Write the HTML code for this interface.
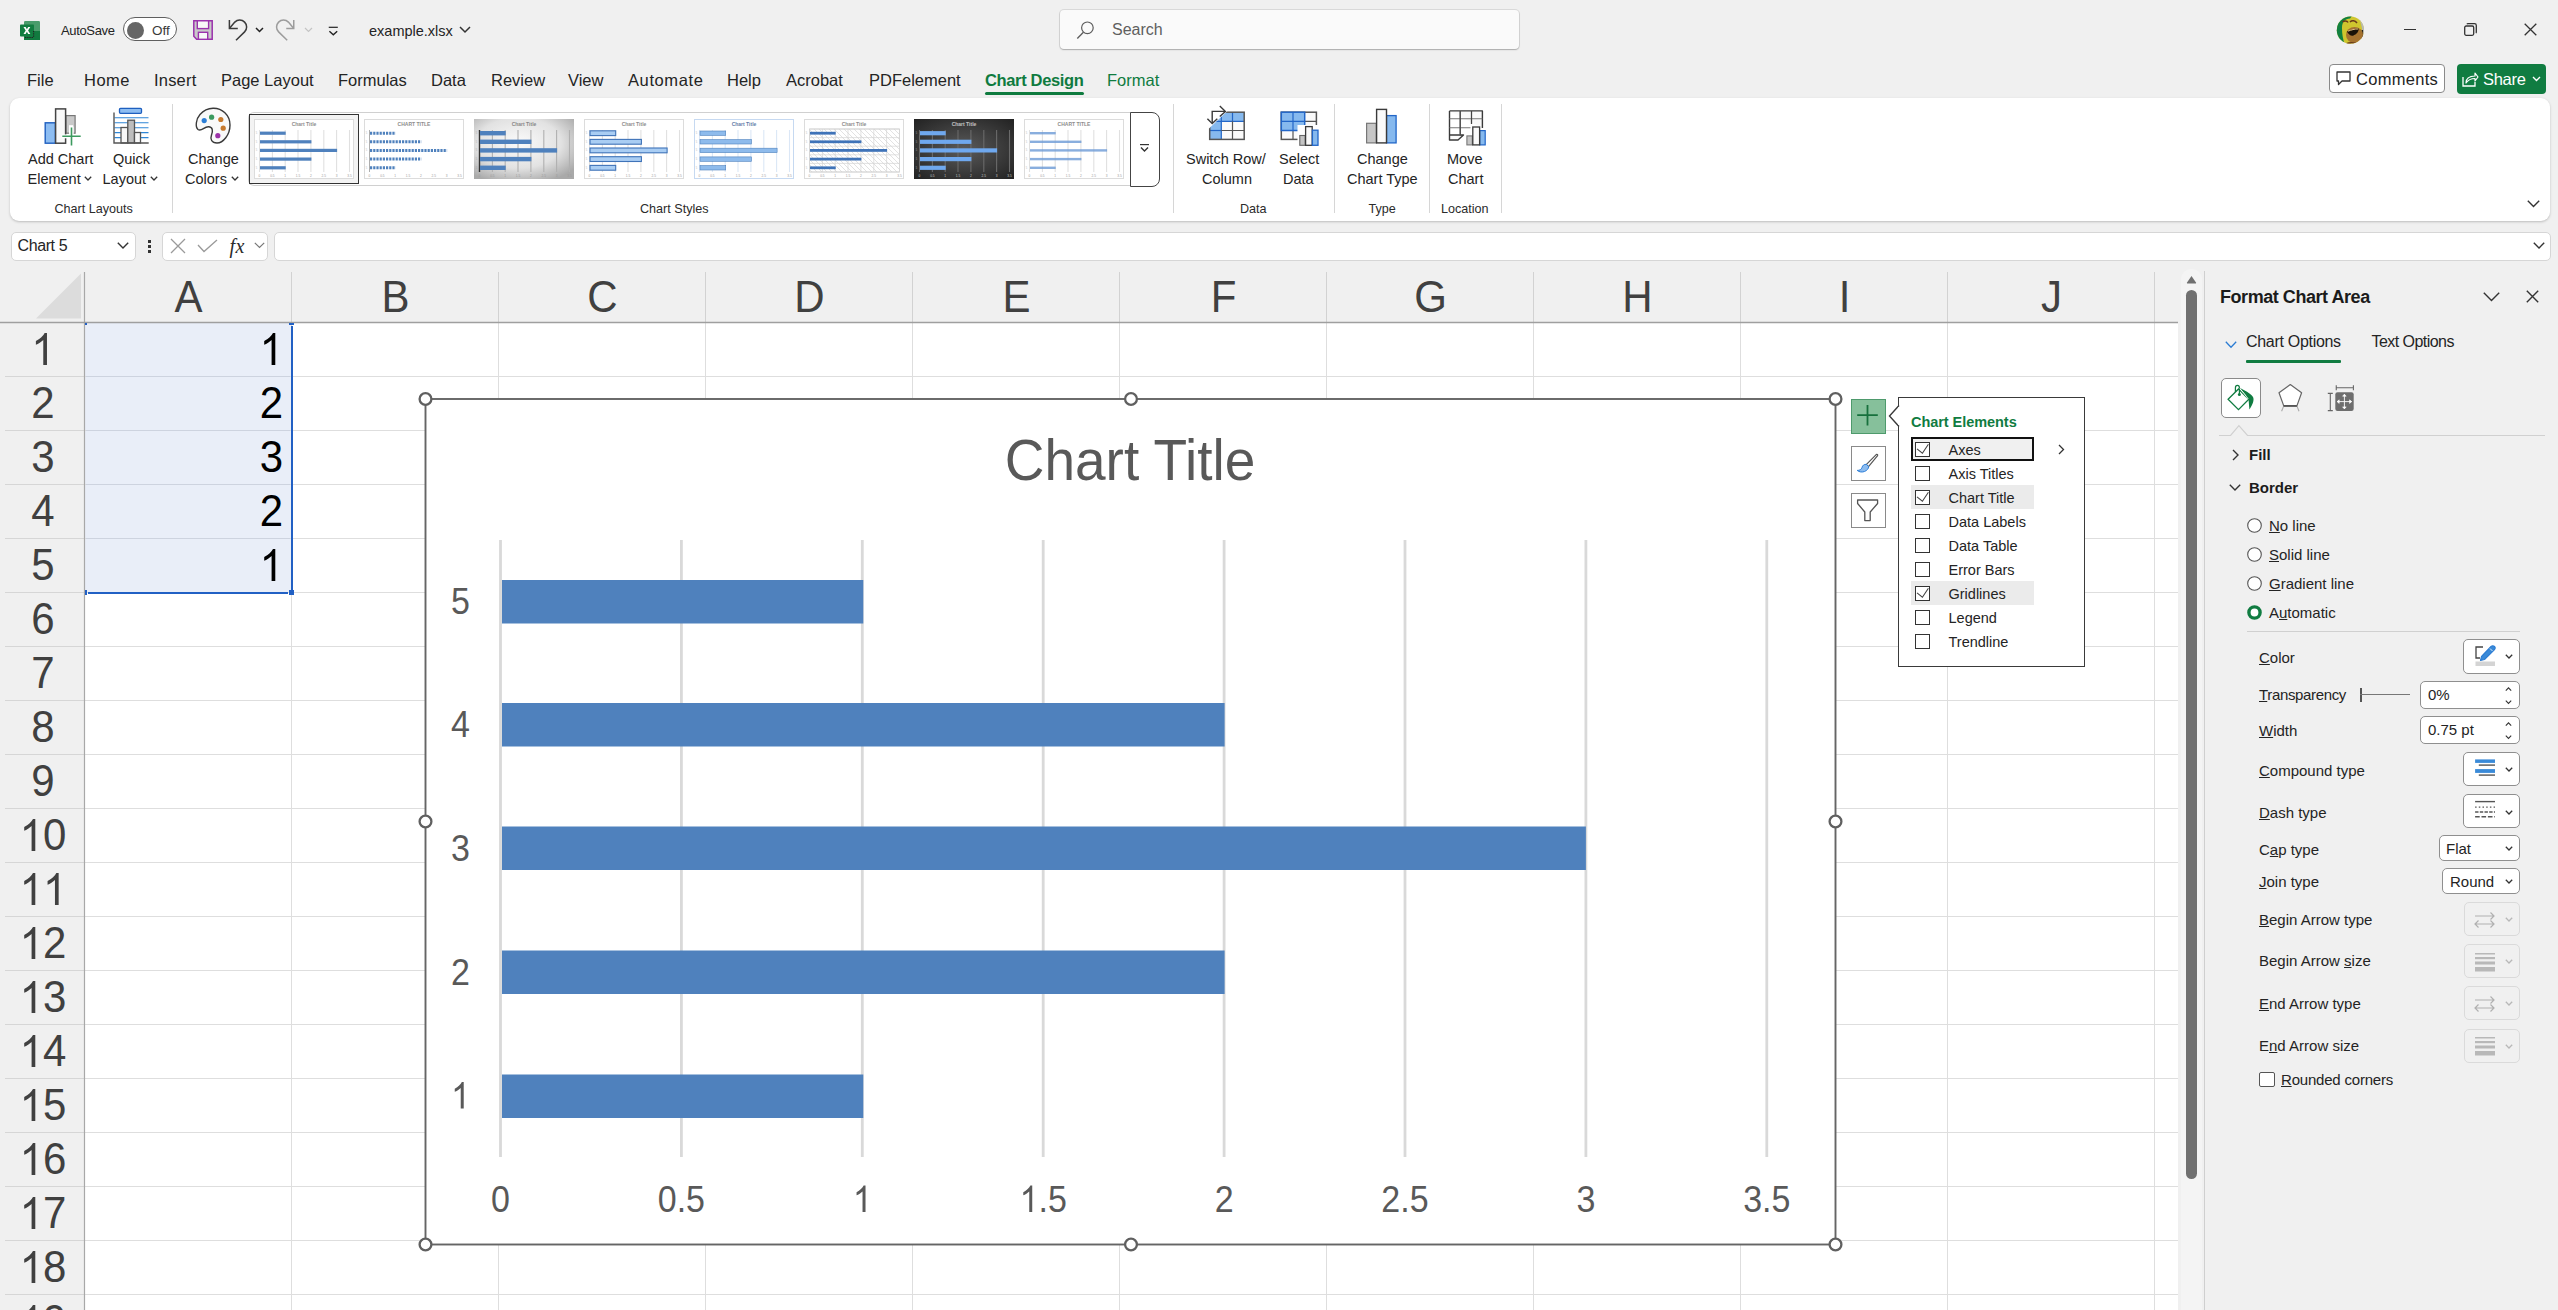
<!DOCTYPE html>
<html><head><meta charset="utf-8"><title>Excel</title>
<style>
html,body{margin:0;padding:0;}
body{width:2558px;height:1310px;overflow:hidden;position:relative;background:#f0f0f0;font-family:"Liberation Sans",sans-serif;}
.t{position:absolute;line-height:1;white-space:nowrap;}
svg{overflow:visible}
</style></head><body>

<svg style="position:absolute;left:20px;top:20px;" width="20" height="20" viewBox="0 0 20 20">
<rect x="4" y="1" width="16" height="19" rx="1.2" fill="#4a9c6b"/>
<rect x="4" y="11" width="16" height="9" fill="#117a3f"/>
<rect x="0" y="4.5" width="14" height="12" rx="0.8" fill="#127d40"/>
<path d="M3.5 7 L5.6 7 L6.9 9.3 L8.2 7 L10.3 7 L8.1 10.5 L10.3 14 L8.2 14 L6.9 11.7 L5.6 14 L3.5 14 L5.7 10.5 Z" fill="#fff"/>
<path d="M5 17.5 H13.5 M13.6 11 V17.5" stroke="#222" stroke-width="1.1" stroke-dasharray="1.3 0.9"/>
</svg>
<div class="t" style="left:61px;top:24.00px;font-size:13px;color:#242424;letter-spacing:-0.35px;">AutoSave</div>
<div style="position:absolute;left:123px;top:17px;width:52px;height:22px;border:1.3px solid #5f5f5f;border-radius:12px;background:#fff;"></div>
<div style="position:absolute;left:127px;top:21.5px;width:17px;height:17px;border-radius:50%;background:#666;"></div>
<div class="t" style="left:152px;top:23.57px;font-size:13.5px;color:#3a3a3a;">Off</div>
<svg style="position:absolute;left:193px;top:20px;" width="20" height="20" viewBox="0 0 20 20">
<path d="M0.8 0.8 H19.2 V19.2 H3.6 L0.8 16.2 Z" fill="#c9c9c9" stroke="#9b32ad" stroke-width="1.5"/>
<rect x="4.3" y="0.8" width="11.3" height="7.8" fill="#f8f8f8" stroke="#9b32ad" stroke-width="1.4"/>
<rect x="5.4" y="12.3" width="9.3" height="7" fill="#f8f8f8" stroke="#9b32ad" stroke-width="1.4"/>
</svg>
<svg style="position:absolute;left:228px;top:19px;" width="20" height="23" viewBox="0 0 20 23"><path d="M1.4 1.1 V9.4 H9.8" fill="none" stroke="#3b3b3b" stroke-width="1.5"/><path d="M1.6 9.2 L6.8 3.1 A6.9 6.9 0 0 1 16.6 12.9 L8 21.3" fill="none" stroke="#3b3b3b" stroke-width="1.5"/></svg>
<svg style="position:absolute;left:255px;top:27px;" width="9" height="6" viewBox="0 0 9 6"><path d="M1 1 L4.5 4.5 L8 1" fill="none" stroke="#222" stroke-width="1.5"/></svg>
<svg style="position:absolute;left:276px;top:19px;" width="20" height="23" viewBox="0 0 20 23"><path d="M17.75 1.1 V9.4 H10.25" fill="none" stroke="#9c9c9c" stroke-width="1.5"/><path d="M17.55 9.2 L12.4 3.1 A6.9 6.9 0 0 0 2.6 12.9 L11.2 21.3" fill="none" stroke="#9c9c9c" stroke-width="1.5"/></svg>
<svg style="position:absolute;left:304px;top:27px;" width="9" height="6" viewBox="0 0 9 6"><path d="M1 1 L4.5 4.5 L8 1" fill="none" stroke="#c4c4c4" stroke-width="1.2"/></svg>
<svg style="position:absolute;left:328px;top:26px;" width="11" height="10" viewBox="0 0 11 10"><path d="M0.75 1.3 H9.8" stroke="#222" stroke-width="1.2"/><path d="M1.4 5.2 L5.3 8.7 L9.2 5.2" fill="none" stroke="#222" stroke-width="1.4"/></svg>
<div class="t" style="left:369px;top:23.73px;font-size:14.5px;color:#242424;">example.xlsx</div>
<svg style="position:absolute;left:459px;top:26px;" width="12" height="8" viewBox="0 0 12 8"><path d="M1 1 L6 6 L11 1" fill="none" stroke="#333" stroke-width="1.5"/></svg>
<div style="position:absolute;left:1060px;top:10px;width:459px;height:39px;background:#fafafa;border-radius:4px;box-shadow:0 1px 1.5px rgba(0,0,0,0.22), 0 0 0 1px rgba(0,0,0,0.09);"></div>
<svg style="position:absolute;left:1076px;top:21px;" width="18" height="18" viewBox="0 0 18 18"><circle cx="11.4" cy="6.8" r="5.8" fill="none" stroke="#5c5c5c" stroke-width="1.2"/><path d="M7.4 11.2 L1.3 17.5" stroke="#5c5c5c" stroke-width="1.3"/></svg>
<div class="t" style="left:1112px;top:22.46px;font-size:16px;color:#5f5f5f;">Search</div>
<svg style="position:absolute;left:2336px;top:16px;" width="29" height="29" viewBox="0 0 29 29">
<defs><clipPath id="av"><circle cx="14.4" cy="14.2" r="13.6"/></clipPath></defs>
<g clip-path="url(#av)">
<rect width="29" height="29" fill="#cfc62e"/>
<path d="M0 0 H16 L14 2.5 C9 2.5 6 6 6 12 C6 18 7 24 9 29 H0 Z" fill="#118040"/>
<path d="M20 0 H29 V9 L24 4 Z" fill="#1d1d1d"/>
<path d="M24 5 L29 9 V29 H24 C27 22 27 12 24 5 Z" fill="#b8b8b8"/>
<path d="M25.5 14 V24 L27 24 V14 Z" fill="#222"/>
<ellipse cx="18.5" cy="19" rx="8.5" ry="8" fill="#a5722f"/>
<path d="M11 15.5 C14 14 19 12 22.5 12.5 C23 15 21 18 17.5 19.5 C15 20.5 12.5 18.5 11 15.5 Z" fill="#1a1208"/>
<path d="M12 15.2 C15 14 19 12.8 22 13" fill="none" stroke="#e8c080" stroke-width="1"/>
<path d="M6.5 6 C8 4.5 11 4.5 12 6.5 M14 6 C16 4 19 4.5 21 7" fill="none" stroke="#6a3a1a" stroke-width="1.6"/>
<path d="M10 28 C14 26 20 27 24 29" fill="none" stroke="#6a3a1a" stroke-width="1.4"/>
</g></svg>
<div style="position:absolute;left:2404px;top:29px;width:12px;height:1.3px;background:#333;"></div>
<svg style="position:absolute;left:2464px;top:23.3px;" width="13" height="13" viewBox="0 0 13 13"><rect x="0.7" y="3" width="9" height="9.3" rx="1.5" fill="none" stroke="#333" stroke-width="1.3"/><path d="M3 1.2 C3.2 0.7 3.5 0.7 4 0.7 H10.5 C11.5 0.7 12.3 1.5 12.3 2.5 V9 C12.3 9.5 12.2 9.8 11.8 10" fill="none" stroke="#333" stroke-width="1.3"/></svg>
<svg style="position:absolute;left:2524px;top:23.3px;" width="13" height="13" viewBox="0 0 13 13"><path d="M0.7 0.7 L12.3 12.3 M12.3 0.7 L0.7 12.3" stroke="#333" stroke-width="1.3"/></svg>
<div class="t" style="left:27px;top:72.03px;font-size:16.5px;color:#242424;letter-spacing:0px;">File</div>
<div class="t" style="left:84px;top:72.03px;font-size:16.5px;color:#242424;letter-spacing:0.5px;">Home</div>
<div class="t" style="left:154px;top:72.03px;font-size:16.5px;color:#242424;letter-spacing:0.2px;">Insert</div>
<div class="t" style="left:221px;top:72.03px;font-size:16.5px;color:#242424;letter-spacing:0px;">Page Layout</div>
<div class="t" style="left:338px;top:72.03px;font-size:16.5px;color:#242424;letter-spacing:0px;">Formulas</div>
<div class="t" style="left:431px;top:72.03px;font-size:16.5px;color:#242424;letter-spacing:0px;">Data</div>
<div class="t" style="left:491px;top:72.03px;font-size:16.5px;color:#242424;letter-spacing:0px;">Review</div>
<div class="t" style="left:568px;top:72.03px;font-size:16.5px;color:#242424;letter-spacing:0px;">View</div>
<div class="t" style="left:628px;top:72.03px;font-size:16.5px;color:#242424;letter-spacing:0.6px;">Automate</div>
<div class="t" style="left:727px;top:72.03px;font-size:16.5px;color:#242424;letter-spacing:0px;">Help</div>
<div class="t" style="left:786px;top:72.03px;font-size:16.5px;color:#242424;letter-spacing:0px;">Acrobat</div>
<div class="t" style="left:869px;top:72.03px;font-size:16.5px;color:#242424;letter-spacing:0px;">PDFelement</div>
<div class="t" style="left:985px;top:72.03px;font-size:16.5px;color:#0f7b3f;font-weight:bold;letter-spacing:-0.35px;">Chart Design</div>
<div style="position:absolute;left:985px;top:92px;width:99px;height:3px;background:#0f7b3f;border-radius:1.5px;"></div>
<div class="t" style="left:1107px;top:72.03px;font-size:16.5px;color:#0f7b3f;">Format</div>
<div style="position:absolute;left:2329px;top:64px;width:116px;height:29px;border:1px solid #8a8a8a;border-radius:4px;background:#fff;box-sizing:border-box;"></div>
<svg style="position:absolute;left:2336px;top:71px;" width="15" height="15" viewBox="0 0 15 15"><path d="M1 1 H14 V10 H6 L2.5 13.5 V10 H1 Z" fill="none" stroke="#333" stroke-width="1.3" stroke-linejoin="round"/></svg>
<div class="t" style="left:2356px;top:71.03px;font-size:16.5px;color:#242424;letter-spacing:0.3px;">Comments</div>
<div style="position:absolute;left:2457px;top:64px;width:89px;height:30px;background:#107c41;border-radius:4px;"></div>
<svg style="position:absolute;left:2462px;top:71px;" width="16" height="16" viewBox="0 0 16 16"><path d="M1 6 V15 H13 V11" fill="none" stroke="#fff" stroke-width="1.3"/><path d="M4 12 C4 7 8 5 13 5 V2 L16 6 L13 10 V7.5 C9 7.5 6 9 4 12 Z" fill="none" stroke="#fff" stroke-width="1.2" stroke-linejoin="round"/></svg>
<div class="t" style="left:2483px;top:71.03px;font-size:16.5px;color:#ffffff;letter-spacing:-0.3px;">Share</div>
<svg style="position:absolute;left:2532px;top:76px;" width="9" height="6" viewBox="0 0 9 6"><path d="M1 1 L4.5 4.5 L8 1" fill="none" stroke="#fff" stroke-width="1.4"/></svg>
<div style="position:absolute;left:10px;top:98px;width:2540px;height:123px;background:#fff;border-radius:9px;box-shadow:0 1px 2.5px rgba(0,0,0,0.22);"></div>
<svg style="position:absolute;left:44px;top:107px;" width="38" height="40" viewBox="0 0 38 40">
<rect x="1.2" y="15.8" width="10.2" height="20.4" fill="#8dbdf2" stroke="#1e5fbf" stroke-width="1.4"/>
<rect x="21.9" y="8.6" width="9.2" height="17.6" fill="#c9c9c9" stroke="#777" stroke-width="1.2"/>
<rect x="11.6" y="1.9" width="10" height="34.3" fill="#f9f9f9" stroke="#444" stroke-width="1.5"/>
<rect x="25" y="18.2" width="4.2" height="8.6" fill="#fff"/>
<rect x="17.6" y="27.4" width="19.8" height="3.9" fill="#fff"/>
<rect x="25.4" y="19.5" width="4.2" height="19.5" fill="#fff"/>
<path d="M27.5 20.4 V38.6 M18.3 29.3 H36.7" stroke="#3c9a5f" stroke-width="1.6"/>
</svg>
<div class="t" style="left:28px;top:151.73px;font-size:14.5px;color:#242424;">Add Chart</div>
<div class="t" style="left:27.5px;top:171.73px;font-size:14.5px;color:#242424;">Element</div>
<svg style="position:absolute;left:84px;top:176px;" width="8" height="5" viewBox="0 0 8 5"><path d="M0.8 0.8 L4 4 L7.2 0.8" fill="none" stroke="#333" stroke-width="1.3"/></svg>
<svg style="position:absolute;left:113px;top:107px;" width="37" height="37" viewBox="0 0 37 37"><rect x="6.5" y="1.3" width="22" height="5" rx="1" fill="#8dbdf2" stroke="#1e5fbf" stroke-width="1.3"/><path d="M1.5 10.8 H35.5" stroke="#2f86d6" stroke-width="1.1"/><path d="M1.5 15.8 H35.5" stroke="#2f86d6" stroke-width="1.1"/><path d="M1.5 20.7 H35.5" stroke="#2f86d6" stroke-width="1.1"/><path d="M1.5 25.6 H35.5" stroke="#2f86d6" stroke-width="1.1"/><path d="M1.5 30.6 H35.5" stroke="#2f86d6" stroke-width="1.1"/><rect x="8" y="20.5" width="6.8" height="15.5" fill="#f7f7f7" stroke="#555" stroke-width="1.3"/><rect x="14.8" y="13.2" width="6.7" height="22.8" fill="#bdbdbd" stroke="#555" stroke-width="1.3"/><rect x="21.5" y="25.5" width="6" height="10.5" fill="#f7f7f7" stroke="#555" stroke-width="1.3"/><path d="M1 5.5 V36 H35.7" fill="none" stroke="#555" stroke-width="1.4"/></svg>
<div class="t" style="left:113px;top:151.73px;font-size:14.5px;color:#242424;">Quick</div>
<div class="t" style="left:102.5px;top:171.73px;font-size:14.5px;color:#242424;">Layout</div>
<svg style="position:absolute;left:150px;top:176px;" width="8" height="5" viewBox="0 0 8 5"><path d="M0.8 0.8 L4 4 L7.2 0.8" fill="none" stroke="#333" stroke-width="1.3"/></svg>
<div style="position:absolute;left:172px;top:104px;width:1px;height:109px;background:#d6d6d6;"></div>
<div class="t" style="left:54.5px;top:203.33px;font-size:12.6px;color:#2b2b2b;">Chart Layouts</div>
<svg style="position:absolute;left:195px;top:107px;" width="37" height="38" viewBox="0 0 37 38">
<path d="M18 1.3 C27 1 35 8 35 18 C35 28 28 36 22 36 C16.5 36 15 32 16.5 28 C18 24 18 20 13.5 19.8 C9 19.6 6.5 25 3 22.5 C0 20 1 12 5 7.5 C8.5 3.5 13 1.4 18 1.3 Z" fill="#f9f9f9" stroke="#3a3a3a" stroke-width="1.4"/>
<circle cx="9.2" cy="13.6" r="2.6" fill="#2d7fd6"/>
<circle cx="16.6" cy="10.2" r="2.6" fill="#3a9a5f"/>
<circle cx="25.8" cy="12.5" r="2.6" fill="#c77a2e"/>
<circle cx="28.2" cy="21.2" r="2.6" fill="#c77a2e"/>
<circle cx="22.8" cy="28.7" r="2.6" fill="#9b32a8"/>
</svg>
<div class="t" style="left:188px;top:151.73px;font-size:14.5px;color:#242424;">Change</div>
<div class="t" style="left:185px;top:171.73px;font-size:14.5px;color:#242424;">Colors</div>
<svg style="position:absolute;left:231px;top:176px;" width="8" height="5" viewBox="0 0 8 5"><path d="M0.8 0.8 L4 4 L7.2 0.8" fill="none" stroke="#333" stroke-width="1.3"/></svg>
<div style="position:absolute;left:248px;top:112px;width:900px;height:74px;border-top:1.2px solid #d0d0d0;border-bottom:1.2px solid #d0d0d0;border-left:1.2px solid #d0d0d0;border-radius:6px 0 0 6px;box-sizing:border-box;"></div>
<div style="position:absolute;left:249px;top:114px;width:110px;height:70px;border:1.7px solid #333;background:#f3f3f3;box-sizing:border-box;"></div>
<svg style="position:absolute;left:254px;top:119px;" width="100" height="60" viewBox="0 0 100 60"><rect x="0.5" y="0.5" width="99" height="59" fill="#fff" stroke="#dcdcdc" stroke-width="1"/><path d="M5.5 11 V53" stroke="#e0e0e0" stroke-width="1.1"/><path d="M18.4 11 V53" stroke="#e0e0e0" stroke-width="1.1"/><path d="M31.2 11 V53" stroke="#e0e0e0" stroke-width="1.1"/><path d="M44.0 11 V53" stroke="#e0e0e0" stroke-width="1.1"/><path d="M56.9 11 V53" stroke="#e0e0e0" stroke-width="1.1"/><path d="M69.8 11 V53" stroke="#e0e0e0" stroke-width="1.1"/><path d="M82.6 11 V53" stroke="#e0e0e0" stroke-width="1.1"/><path d="M95.5 11 V53" stroke="#e0e0e0" stroke-width="1.1"/><text x="50" y="6.5" font-size="5" text-anchor="middle" fill="#666" font-family="Liberation Sans" font-weight="bold" opacity="0.75">Chart Title</text><rect x="6" y="12.6" width="25.7" height="3.2" fill="#4f81bd"/><rect x="6" y="21.2" width="51.4" height="3.2" fill="#4f81bd"/><rect x="6" y="29.799999999999997" width="77.1" height="3.2" fill="#4f81bd"/><rect x="6" y="38.5" width="51.4" height="3.2" fill="#4f81bd"/><rect x="6" y="47.199999999999996" width="25.7" height="3.2" fill="#4f81bd"/><text x="5.5" y="57.5" font-size="3.2" text-anchor="middle" fill="#999" font-family="Liberation Sans">0</text><text x="18.4" y="57.5" font-size="3.2" text-anchor="middle" fill="#999" font-family="Liberation Sans">0.5</text><text x="31.2" y="57.5" font-size="3.2" text-anchor="middle" fill="#999" font-family="Liberation Sans">1</text><text x="44.0" y="57.5" font-size="3.2" text-anchor="middle" fill="#999" font-family="Liberation Sans">1.5</text><text x="56.9" y="57.5" font-size="3.2" text-anchor="middle" fill="#999" font-family="Liberation Sans">2</text><text x="69.8" y="57.5" font-size="3.2" text-anchor="middle" fill="#999" font-family="Liberation Sans">2.5</text><text x="82.6" y="57.5" font-size="3.2" text-anchor="middle" fill="#999" font-family="Liberation Sans">3</text><text x="95.5" y="57.5" font-size="3.2" text-anchor="middle" fill="#999" font-family="Liberation Sans">3.5</text><text x="2.5" y="15.2" font-size="2.6" text-anchor="middle" fill="#999" font-family="Liberation Sans" opacity="0.7">5</text><text x="2.5" y="23.8" font-size="2.6" text-anchor="middle" fill="#999" font-family="Liberation Sans" opacity="0.7">5</text><text x="2.5" y="32.4" font-size="2.6" text-anchor="middle" fill="#999" font-family="Liberation Sans" opacity="0.7">5</text><text x="2.5" y="41.1" font-size="2.6" text-anchor="middle" fill="#999" font-family="Liberation Sans" opacity="0.7">5</text><text x="2.5" y="49.8" font-size="2.6" text-anchor="middle" fill="#999" font-family="Liberation Sans" opacity="0.7">5</text></svg>
<svg style="position:absolute;left:364px;top:119px;" width="100" height="60" viewBox="0 0 100 60"><rect x="0.5" y="0.5" width="99" height="59" fill="#fff" stroke="#dcdcdc" stroke-width="1"/><path d="M5.5 11 V53" stroke="#777" stroke-width="0.6"/><text x="50" y="6.5" font-size="5" text-anchor="middle" fill="#666" font-family="Liberation Sans" font-weight="bold" opacity="0.75">CHART TITLE</text><path d="M6 14.2 H31.7" stroke="#4f81bd" stroke-width="3" stroke-dasharray="2.2 1"/><path d="M6 22.8 H57.4" stroke="#4f81bd" stroke-width="3" stroke-dasharray="2.2 1"/><path d="M6 31.4 H83.1" stroke="#4f81bd" stroke-width="3" stroke-dasharray="2.2 1"/><path d="M6 40.1 H57.4" stroke="#4f81bd" stroke-width="3" stroke-dasharray="2.2 1"/><path d="M6 48.8 H31.7" stroke="#4f81bd" stroke-width="3" stroke-dasharray="2.2 1"/><text x="5.5" y="57.5" font-size="3.2" text-anchor="middle" fill="#999" font-family="Liberation Sans">0</text><text x="18.4" y="57.5" font-size="3.2" text-anchor="middle" fill="#999" font-family="Liberation Sans">0.5</text><text x="31.2" y="57.5" font-size="3.2" text-anchor="middle" fill="#999" font-family="Liberation Sans">1</text><text x="44.0" y="57.5" font-size="3.2" text-anchor="middle" fill="#999" font-family="Liberation Sans">1.5</text><text x="56.9" y="57.5" font-size="3.2" text-anchor="middle" fill="#999" font-family="Liberation Sans">2</text><text x="69.8" y="57.5" font-size="3.2" text-anchor="middle" fill="#999" font-family="Liberation Sans">2.5</text><text x="82.6" y="57.5" font-size="3.2" text-anchor="middle" fill="#999" font-family="Liberation Sans">3</text><text x="95.5" y="57.5" font-size="3.2" text-anchor="middle" fill="#999" font-family="Liberation Sans">3.5</text><text x="2.5" y="15.2" font-size="2.6" text-anchor="middle" fill="#999" font-family="Liberation Sans" opacity="0.7">5</text><text x="2.5" y="23.8" font-size="2.6" text-anchor="middle" fill="#999" font-family="Liberation Sans" opacity="0.7">5</text><text x="2.5" y="32.4" font-size="2.6" text-anchor="middle" fill="#999" font-family="Liberation Sans" opacity="0.7">5</text><text x="2.5" y="41.1" font-size="2.6" text-anchor="middle" fill="#999" font-family="Liberation Sans" opacity="0.7">5</text><text x="2.5" y="49.8" font-size="2.6" text-anchor="middle" fill="#999" font-family="Liberation Sans" opacity="0.7">5</text></svg>
<svg style="position:absolute;left:474px;top:119px;" width="100" height="60" viewBox="0 0 100 60"><defs><radialGradient id="g3" cx="0.45" cy="0.4" r="0.7"><stop offset="0" stop-color="#fbfbfb"/><stop offset="0.6" stop-color="#e2e2e2"/><stop offset="1" stop-color="#a9a9a9"/></radialGradient></defs><rect width="100" height="60" fill="url(#g3)"/><path d="M5.5 11 V53" stroke="#b0b0b0" stroke-width="1.1"/><path d="M18.4 11 V53" stroke="#b0b0b0" stroke-width="1.1"/><path d="M31.2 11 V53" stroke="#b0b0b0" stroke-width="1.1"/><path d="M44.0 11 V53" stroke="#b0b0b0" stroke-width="1.1"/><path d="M56.9 11 V53" stroke="#b0b0b0" stroke-width="1.1"/><path d="M69.8 11 V53" stroke="#b0b0b0" stroke-width="1.1"/><path d="M82.6 11 V53" stroke="#b0b0b0" stroke-width="1.1"/><path d="M95.5 11 V53" stroke="#b0b0b0" stroke-width="1.1"/><path d="M5.5 11 V53" stroke="#333" stroke-width="1.4"/><text x="50" y="6.5" font-size="5" text-anchor="middle" fill="#666" font-family="Liberation Sans" font-weight="bold" opacity="0.75">Chart Title</text><rect x="6" y="12.0" width="25.7" height="4.4" fill="#4f81bd"/><rect x="6" y="20.6" width="51.4" height="4.4" fill="#4f81bd"/><rect x="6" y="29.2" width="77.1" height="4.4" fill="#4f81bd"/><rect x="6" y="37.9" width="51.4" height="4.4" fill="#4f81bd"/><rect x="6" y="46.599999999999994" width="25.7" height="4.4" fill="#4f81bd"/><text x="5.5" y="57.5" font-size="3.2" text-anchor="middle" fill="#999" font-family="Liberation Sans">0</text><text x="18.4" y="57.5" font-size="3.2" text-anchor="middle" fill="#999" font-family="Liberation Sans">0.5</text><text x="31.2" y="57.5" font-size="3.2" text-anchor="middle" fill="#999" font-family="Liberation Sans">1</text><text x="44.0" y="57.5" font-size="3.2" text-anchor="middle" fill="#999" font-family="Liberation Sans">1.5</text><text x="56.9" y="57.5" font-size="3.2" text-anchor="middle" fill="#999" font-family="Liberation Sans">2</text><text x="69.8" y="57.5" font-size="3.2" text-anchor="middle" fill="#999" font-family="Liberation Sans">2.5</text><text x="82.6" y="57.5" font-size="3.2" text-anchor="middle" fill="#999" font-family="Liberation Sans">3</text><text x="95.5" y="57.5" font-size="3.2" text-anchor="middle" fill="#999" font-family="Liberation Sans">3.5</text><text x="2.5" y="15.2" font-size="2.6" text-anchor="middle" fill="#999" font-family="Liberation Sans" opacity="0.7">5</text><text x="2.5" y="23.8" font-size="2.6" text-anchor="middle" fill="#999" font-family="Liberation Sans" opacity="0.7">5</text><text x="2.5" y="32.4" font-size="2.6" text-anchor="middle" fill="#999" font-family="Liberation Sans" opacity="0.7">5</text><text x="2.5" y="41.1" font-size="2.6" text-anchor="middle" fill="#999" font-family="Liberation Sans" opacity="0.7">5</text><text x="2.5" y="49.8" font-size="2.6" text-anchor="middle" fill="#999" font-family="Liberation Sans" opacity="0.7">5</text></svg>
<svg style="position:absolute;left:584px;top:119px;" width="100" height="60" viewBox="0 0 100 60"><rect x="0.5" y="0.5" width="99" height="59" fill="#fff" stroke="#dcdcdc" stroke-width="1"/><path d="M5.5 11 V53" stroke="#e0e0e0" stroke-width="1.1"/><path d="M18.4 11 V53" stroke="#e0e0e0" stroke-width="1.1"/><path d="M31.2 11 V53" stroke="#e0e0e0" stroke-width="1.1"/><path d="M44.0 11 V53" stroke="#e0e0e0" stroke-width="1.1"/><path d="M56.9 11 V53" stroke="#e0e0e0" stroke-width="1.1"/><path d="M69.8 11 V53" stroke="#e0e0e0" stroke-width="1.1"/><path d="M82.6 11 V53" stroke="#e0e0e0" stroke-width="1.1"/><path d="M95.5 11 V53" stroke="#e0e0e0" stroke-width="1.1"/><text x="50" y="6.5" font-size="5" text-anchor="middle" fill="#666" font-family="Liberation Sans" font-weight="bold" opacity="0.75">Chart Title</text><rect x="6" y="11.799999999999999" width="25.7" height="4.8" fill="#a9cdf3" stroke="#3f73b8" stroke-width="1.1"/><rect x="6" y="20.400000000000002" width="51.4" height="4.8" fill="#a9cdf3" stroke="#3f73b8" stroke-width="1.1"/><rect x="6" y="29.0" width="77.1" height="4.8" fill="#a9cdf3" stroke="#3f73b8" stroke-width="1.1"/><rect x="6" y="37.7" width="51.4" height="4.8" fill="#a9cdf3" stroke="#3f73b8" stroke-width="1.1"/><rect x="6" y="46.4" width="25.7" height="4.8" fill="#a9cdf3" stroke="#3f73b8" stroke-width="1.1"/><text x="5.5" y="57.5" font-size="3.2" text-anchor="middle" fill="#999" font-family="Liberation Sans">0</text><text x="18.4" y="57.5" font-size="3.2" text-anchor="middle" fill="#999" font-family="Liberation Sans">0.5</text><text x="31.2" y="57.5" font-size="3.2" text-anchor="middle" fill="#999" font-family="Liberation Sans">1</text><text x="44.0" y="57.5" font-size="3.2" text-anchor="middle" fill="#999" font-family="Liberation Sans">1.5</text><text x="56.9" y="57.5" font-size="3.2" text-anchor="middle" fill="#999" font-family="Liberation Sans">2</text><text x="69.8" y="57.5" font-size="3.2" text-anchor="middle" fill="#999" font-family="Liberation Sans">2.5</text><text x="82.6" y="57.5" font-size="3.2" text-anchor="middle" fill="#999" font-family="Liberation Sans">3</text><text x="95.5" y="57.5" font-size="3.2" text-anchor="middle" fill="#999" font-family="Liberation Sans">3.5</text><text x="2.5" y="15.2" font-size="2.6" text-anchor="middle" fill="#999" font-family="Liberation Sans" opacity="0.7">5</text><text x="2.5" y="23.8" font-size="2.6" text-anchor="middle" fill="#999" font-family="Liberation Sans" opacity="0.7">5</text><text x="2.5" y="32.4" font-size="2.6" text-anchor="middle" fill="#999" font-family="Liberation Sans" opacity="0.7">5</text><text x="2.5" y="41.1" font-size="2.6" text-anchor="middle" fill="#999" font-family="Liberation Sans" opacity="0.7">5</text><text x="2.5" y="49.8" font-size="2.6" text-anchor="middle" fill="#999" font-family="Liberation Sans" opacity="0.7">5</text></svg>
<svg style="position:absolute;left:694px;top:119px;" width="100" height="60" viewBox="0 0 100 60"><rect x="0.5" y="0.5" width="99" height="59" fill="#fff" stroke="#c6d9f1" stroke-width="1"/><path d="M5.5 11 V53" stroke="#dbe7f6" stroke-width="1.1"/><path d="M18.4 11 V53" stroke="#dbe7f6" stroke-width="1.1"/><path d="M31.2 11 V53" stroke="#dbe7f6" stroke-width="1.1"/><path d="M44.0 11 V53" stroke="#dbe7f6" stroke-width="1.1"/><path d="M56.9 11 V53" stroke="#dbe7f6" stroke-width="1.1"/><path d="M69.8 11 V53" stroke="#dbe7f6" stroke-width="1.1"/><path d="M82.6 11 V53" stroke="#dbe7f6" stroke-width="1.1"/><path d="M95.5 11 V53" stroke="#dbe7f6" stroke-width="1.1"/><text x="50" y="6.5" font-size="5" text-anchor="middle" fill="#2b4f8a" font-family="Liberation Sans" font-weight="bold" opacity="0.75">Chart Title</text><rect x="6" y="12.0" width="25.7" height="4.4" fill="#8ebbec" stroke="#4f81bd" stroke-width="0.6"/><rect x="6" y="20.6" width="51.4" height="4.4" fill="#8ebbec" stroke="#4f81bd" stroke-width="0.6"/><rect x="6" y="29.2" width="77.1" height="4.4" fill="#8ebbec" stroke="#4f81bd" stroke-width="0.6"/><rect x="6" y="37.9" width="51.4" height="4.4" fill="#8ebbec" stroke="#4f81bd" stroke-width="0.6"/><rect x="6" y="46.599999999999994" width="25.7" height="4.4" fill="#8ebbec" stroke="#4f81bd" stroke-width="0.6"/><text x="5.5" y="57.5" font-size="3.2" text-anchor="middle" fill="#999" font-family="Liberation Sans">0</text><text x="18.4" y="57.5" font-size="3.2" text-anchor="middle" fill="#999" font-family="Liberation Sans">0.5</text><text x="31.2" y="57.5" font-size="3.2" text-anchor="middle" fill="#999" font-family="Liberation Sans">1</text><text x="44.0" y="57.5" font-size="3.2" text-anchor="middle" fill="#999" font-family="Liberation Sans">1.5</text><text x="56.9" y="57.5" font-size="3.2" text-anchor="middle" fill="#999" font-family="Liberation Sans">2</text><text x="69.8" y="57.5" font-size="3.2" text-anchor="middle" fill="#999" font-family="Liberation Sans">2.5</text><text x="82.6" y="57.5" font-size="3.2" text-anchor="middle" fill="#999" font-family="Liberation Sans">3</text><text x="95.5" y="57.5" font-size="3.2" text-anchor="middle" fill="#999" font-family="Liberation Sans">3.5</text><text x="2.5" y="15.2" font-size="2.6" text-anchor="middle" fill="#999" font-family="Liberation Sans" opacity="0.7">5</text><text x="2.5" y="23.8" font-size="2.6" text-anchor="middle" fill="#999" font-family="Liberation Sans" opacity="0.7">5</text><text x="2.5" y="32.4" font-size="2.6" text-anchor="middle" fill="#999" font-family="Liberation Sans" opacity="0.7">5</text><text x="2.5" y="41.1" font-size="2.6" text-anchor="middle" fill="#999" font-family="Liberation Sans" opacity="0.7">5</text><text x="2.5" y="49.8" font-size="2.6" text-anchor="middle" fill="#999" font-family="Liberation Sans" opacity="0.7">5</text></svg>
<svg style="position:absolute;left:804px;top:119px;" width="100" height="60" viewBox="0 0 100 60"><rect x="0.5" y="0.5" width="99" height="59" fill="#fff" stroke="#dcdcdc" stroke-width="1"/><defs><pattern id="h6" width="5" height="5" patternUnits="userSpaceOnUse"><path d="M0 0 L5 5" stroke="#cfcfcf" stroke-width="0.6"/></pattern></defs><rect x="5.5" y="10" width="90" height="43" fill="url(#h6)" stroke="#d0d0d0" stroke-width="0.8"/><path d="M5.5 10 V53" stroke="#d4d4d4" stroke-width="0.7"/><path d="M18.4 10 V53" stroke="#d4d4d4" stroke-width="0.7"/><path d="M31.2 10 V53" stroke="#d4d4d4" stroke-width="0.7"/><path d="M44.0 10 V53" stroke="#d4d4d4" stroke-width="0.7"/><path d="M56.9 10 V53" stroke="#d4d4d4" stroke-width="0.7"/><path d="M69.8 10 V53" stroke="#d4d4d4" stroke-width="0.7"/><path d="M82.6 10 V53" stroke="#d4d4d4" stroke-width="0.7"/><path d="M95.5 10 V53" stroke="#d4d4d4" stroke-width="0.7"/><path d="M5.5 10.0 H95.5" stroke="#d4d4d4" stroke-width="0.7"/><path d="M5.5 18.6 H95.5" stroke="#d4d4d4" stroke-width="0.7"/><path d="M5.5 27.2 H95.5" stroke="#d4d4d4" stroke-width="0.7"/><path d="M5.5 35.8 H95.5" stroke="#d4d4d4" stroke-width="0.7"/><path d="M5.5 44.4 H95.5" stroke="#d4d4d4" stroke-width="0.7"/><path d="M5.5 53.0 H95.5" stroke="#d4d4d4" stroke-width="0.7"/><text x="50" y="6.5" font-size="5" text-anchor="middle" fill="#666" font-family="Liberation Sans" font-weight="bold" opacity="0.75">Chart Title</text><rect x="6" y="12.799999999999999" width="25.7" height="2.8" fill="#3f73b8"/><rect x="6" y="21.400000000000002" width="51.4" height="2.8" fill="#3f73b8"/><rect x="6" y="30.0" width="77.1" height="2.8" fill="#3f73b8"/><rect x="6" y="38.7" width="51.4" height="2.8" fill="#3f73b8"/><rect x="6" y="47.4" width="25.7" height="2.8" fill="#3f73b8"/><text x="5.5" y="57.5" font-size="3.2" text-anchor="middle" fill="#999" font-family="Liberation Sans">0</text><text x="18.4" y="57.5" font-size="3.2" text-anchor="middle" fill="#999" font-family="Liberation Sans">0.5</text><text x="31.2" y="57.5" font-size="3.2" text-anchor="middle" fill="#999" font-family="Liberation Sans">1</text><text x="44.0" y="57.5" font-size="3.2" text-anchor="middle" fill="#999" font-family="Liberation Sans">1.5</text><text x="56.9" y="57.5" font-size="3.2" text-anchor="middle" fill="#999" font-family="Liberation Sans">2</text><text x="69.8" y="57.5" font-size="3.2" text-anchor="middle" fill="#999" font-family="Liberation Sans">2.5</text><text x="82.6" y="57.5" font-size="3.2" text-anchor="middle" fill="#999" font-family="Liberation Sans">3</text><text x="95.5" y="57.5" font-size="3.2" text-anchor="middle" fill="#999" font-family="Liberation Sans">3.5</text><text x="2.5" y="15.2" font-size="2.6" text-anchor="middle" fill="#999" font-family="Liberation Sans" opacity="0.7">5</text><text x="2.5" y="23.8" font-size="2.6" text-anchor="middle" fill="#999" font-family="Liberation Sans" opacity="0.7">5</text><text x="2.5" y="32.4" font-size="2.6" text-anchor="middle" fill="#999" font-family="Liberation Sans" opacity="0.7">5</text><text x="2.5" y="41.1" font-size="2.6" text-anchor="middle" fill="#999" font-family="Liberation Sans" opacity="0.7">5</text><text x="2.5" y="49.8" font-size="2.6" text-anchor="middle" fill="#999" font-family="Liberation Sans" opacity="0.7">5</text></svg>
<svg style="position:absolute;left:914px;top:119px;" width="100" height="60" viewBox="0 0 100 60"><defs><radialGradient id="g7" cx="0.5" cy="0.5" r="0.75"><stop offset="0" stop-color="#5a5a5a"/><stop offset="1" stop-color="#1e1e1e"/></radialGradient></defs><rect width="100" height="60" fill="url(#g7)"/><path d="M5.5 11 V53" stroke="#6a6a6a" stroke-width="1.1"/><path d="M18.4 11 V53" stroke="#6a6a6a" stroke-width="1.1"/><path d="M31.2 11 V53" stroke="#6a6a6a" stroke-width="1.1"/><path d="M44.0 11 V53" stroke="#6a6a6a" stroke-width="1.1"/><path d="M56.9 11 V53" stroke="#6a6a6a" stroke-width="1.1"/><path d="M69.8 11 V53" stroke="#6a6a6a" stroke-width="1.1"/><path d="M82.6 11 V53" stroke="#6a6a6a" stroke-width="1.1"/><path d="M95.5 11 V53" stroke="#6a6a6a" stroke-width="1.1"/><text x="50" y="6.5" font-size="5" text-anchor="middle" fill="#eee" font-family="Liberation Sans" font-weight="bold" opacity="0.75">Chart Title</text><rect x="6" y="12.1" width="25.7" height="4.2" fill="#6fa8ee"/><rect x="6" y="20.7" width="51.4" height="4.2" fill="#6fa8ee"/><rect x="6" y="29.299999999999997" width="77.1" height="4.2" fill="#6fa8ee"/><rect x="6" y="38.0" width="51.4" height="4.2" fill="#6fa8ee"/><rect x="6" y="46.699999999999996" width="25.7" height="4.2" fill="#6fa8ee"/><text x="5.5" y="57.5" font-size="3.2" text-anchor="middle" fill="#ccc" font-family="Liberation Sans">0</text><text x="18.4" y="57.5" font-size="3.2" text-anchor="middle" fill="#ccc" font-family="Liberation Sans">0.5</text><text x="31.2" y="57.5" font-size="3.2" text-anchor="middle" fill="#ccc" font-family="Liberation Sans">1</text><text x="44.0" y="57.5" font-size="3.2" text-anchor="middle" fill="#ccc" font-family="Liberation Sans">1.5</text><text x="56.9" y="57.5" font-size="3.2" text-anchor="middle" fill="#ccc" font-family="Liberation Sans">2</text><text x="69.8" y="57.5" font-size="3.2" text-anchor="middle" fill="#ccc" font-family="Liberation Sans">2.5</text><text x="82.6" y="57.5" font-size="3.2" text-anchor="middle" fill="#ccc" font-family="Liberation Sans">3</text><text x="95.5" y="57.5" font-size="3.2" text-anchor="middle" fill="#ccc" font-family="Liberation Sans">3.5</text><text x="2.5" y="15.2" font-size="2.6" text-anchor="middle" fill="#ccc" font-family="Liberation Sans" opacity="0.7">5</text><text x="2.5" y="23.8" font-size="2.6" text-anchor="middle" fill="#ccc" font-family="Liberation Sans" opacity="0.7">5</text><text x="2.5" y="32.4" font-size="2.6" text-anchor="middle" fill="#ccc" font-family="Liberation Sans" opacity="0.7">5</text><text x="2.5" y="41.1" font-size="2.6" text-anchor="middle" fill="#ccc" font-family="Liberation Sans" opacity="0.7">5</text><text x="2.5" y="49.8" font-size="2.6" text-anchor="middle" fill="#ccc" font-family="Liberation Sans" opacity="0.7">5</text></svg>
<svg style="position:absolute;left:1024px;top:119px;" width="100" height="60" viewBox="0 0 100 60"><rect x="0.5" y="0.5" width="99" height="59" fill="#fff" stroke="#dcdcdc" stroke-width="1"/><path d="M5.5 11 V53" stroke="#e0e0e0" stroke-width="1.1"/><path d="M18.4 11 V53" stroke="#e0e0e0" stroke-width="1.1"/><path d="M31.2 11 V53" stroke="#e0e0e0" stroke-width="1.1"/><path d="M44.0 11 V53" stroke="#e0e0e0" stroke-width="1.1"/><path d="M56.9 11 V53" stroke="#e0e0e0" stroke-width="1.1"/><path d="M69.8 11 V53" stroke="#e0e0e0" stroke-width="1.1"/><path d="M82.6 11 V53" stroke="#e0e0e0" stroke-width="1.1"/><path d="M95.5 11 V53" stroke="#e0e0e0" stroke-width="1.1"/><text x="50" y="6.5" font-size="5" text-anchor="middle" fill="#666" font-family="Liberation Sans" font-weight="bold" opacity="0.75">CHART TITLE</text><rect x="6" y="13.0" width="25.7" height="2.4" fill="#6c9ad6" opacity="0.8"/><rect x="6" y="21.6" width="51.4" height="2.4" fill="#6c9ad6" opacity="0.8"/><rect x="6" y="30.2" width="77.1" height="2.4" fill="#6c9ad6" opacity="0.8"/><rect x="6" y="38.9" width="51.4" height="2.4" fill="#6c9ad6" opacity="0.8"/><rect x="6" y="47.599999999999994" width="25.7" height="2.4" fill="#6c9ad6" opacity="0.8"/><text x="5.5" y="57.5" font-size="3.2" text-anchor="middle" fill="#999" font-family="Liberation Sans">0</text><text x="18.4" y="57.5" font-size="3.2" text-anchor="middle" fill="#999" font-family="Liberation Sans">0.5</text><text x="31.2" y="57.5" font-size="3.2" text-anchor="middle" fill="#999" font-family="Liberation Sans">1</text><text x="44.0" y="57.5" font-size="3.2" text-anchor="middle" fill="#999" font-family="Liberation Sans">1.5</text><text x="56.9" y="57.5" font-size="3.2" text-anchor="middle" fill="#999" font-family="Liberation Sans">2</text><text x="69.8" y="57.5" font-size="3.2" text-anchor="middle" fill="#999" font-family="Liberation Sans">2.5</text><text x="82.6" y="57.5" font-size="3.2" text-anchor="middle" fill="#999" font-family="Liberation Sans">3</text><text x="95.5" y="57.5" font-size="3.2" text-anchor="middle" fill="#999" font-family="Liberation Sans">3.5</text><text x="2.5" y="15.2" font-size="2.6" text-anchor="middle" fill="#999" font-family="Liberation Sans" opacity="0.7">5</text><text x="2.5" y="23.8" font-size="2.6" text-anchor="middle" fill="#999" font-family="Liberation Sans" opacity="0.7">5</text><text x="2.5" y="32.4" font-size="2.6" text-anchor="middle" fill="#999" font-family="Liberation Sans" opacity="0.7">5</text><text x="2.5" y="41.1" font-size="2.6" text-anchor="middle" fill="#999" font-family="Liberation Sans" opacity="0.7">5</text><text x="2.5" y="49.8" font-size="2.6" text-anchor="middle" fill="#999" font-family="Liberation Sans" opacity="0.7">5</text></svg>
<div style="position:absolute;left:1130px;top:112px;width:30px;height:74.5px;border:1.3px solid #444;border-left:1.3px solid #444;border-radius:0 8px 8px 0;box-sizing:border-box;background:#fff;"></div>
<svg style="position:absolute;left:1140px;top:144px;" width="10" height="8" viewBox="0 0 10 8"><path d="M0 0.6 H9" stroke="#333" stroke-width="1.2"/><path d="M1 3.5 L4.5 7 L8 3.5" fill="none" stroke="#333" stroke-width="1.4"/></svg>
<div class="t" style="left:640px;top:203.33px;font-size:12.6px;color:#2b2b2b;">Chart Styles</div>
<div style="position:absolute;left:1173px;top:104px;width:1px;height:109px;background:#d6d6d6;"></div>
<svg style="position:absolute;left:1200px;top:100px;" width="130" height="50" viewBox="0 0 130 50"><rect x="9.7" y="12.2" width="34.5" height="27.2" fill="#fafafa"/><path d="M21.3 12.2 H44.2 V21.3 H9.7 Z" fill="#86b9ee"/><rect x="9.7" y="21.3" width="11.6" height="18.1" fill="#86b9ee"/><path d="M9.7 21.3 H44.2 M21.3 12.2 V39.4 M32.5 12.2 V21.3" stroke="#2266c8" stroke-width="1.2"/><path d="M9.7 30.5 H21.3" stroke="#2266c8" stroke-width="1.2"/><path d="M21.3 30.5 H44.2 M32.5 21.3 V39.4" stroke="#555" stroke-width="1.2"/><rect x="9.7" y="12.2" width="34.5" height="27.2" fill="none" stroke="#555" stroke-width="1.5"/><path d="M0 0 H29 V9.5 L9 28.5 H0 Z" fill="#fff"/><path d="M12.2 23.2 V11.4 H25" fill="none" stroke="#3a3a3a" stroke-width="1.4"/><path d="M19.8 6.1 L25.4 11.4 L19.8 16.6 M7.4 18.8 L12.2 23.6 L17.3 18.8" fill="none" stroke="#3a3a3a" stroke-width="1.4"/><rect x="81.3" y="12.2" width="35.1" height="27.2" fill="#fafafa" stroke="#555" stroke-width="1.5"/><path d="M93 30.5 V39.4 M104.7 21.3 H116.4" stroke="#555" stroke-width="1.2"/><rect x="81.3" y="12.2" width="23.4" height="18.3" fill="#86b9ee" stroke="#2266c8" stroke-width="1.5"/><path d="M81.3 21.3 H104.7 M93 12.2 V30.5" stroke="#2266c8" stroke-width="1.2"/><rect x="97.5" y="25" width="22" height="21" fill="#fff"/><rect x="99.8" y="35.5" width="5.4" height="9.8" fill="#c4c4c4" stroke="#666" stroke-width="1.1"/><rect x="105.6" y="26.6" width="6.6" height="18.7" fill="#fafafa" stroke="#3a3a3a" stroke-width="1.3"/><rect x="112.4" y="30.2" width="5.6" height="15.1" fill="#86b9ee" stroke="#2266c8" stroke-width="1.3"/></svg>
<div class="t" style="left:1186px;top:151.73px;font-size:14.5px;color:#242424;">Switch Row/</div>
<div class="t" style="left:1202px;top:171.73px;font-size:14.5px;color:#242424;">Column</div>
<div class="t" style="left:1279px;top:151.73px;font-size:14.5px;color:#242424;">Select</div>
<div class="t" style="left:1283px;top:171.73px;font-size:14.5px;color:#242424;">Data</div>
<div style="position:absolute;left:1334px;top:104px;width:1px;height:109px;background:#d6d6d6;"></div>
<div class="t" style="left:1240px;top:203.33px;font-size:12.6px;color:#2b2b2b;">Data</div>
<svg style="position:absolute;left:1355px;top:100px;" width="140" height="50" viewBox="0 0 140 50"><rect x="11.6" y="23.3" width="9.7" height="19.6" fill="#c6c6c6" stroke="#777" stroke-width="1.2"/><rect x="31.5" y="15.6" width="9.6" height="27.3" fill="#86b9ee" stroke="#2266c8" stroke-width="1.3"/><rect x="21.6" y="9.4" width="9.9" height="33.5" fill="#fafafa" stroke="#3a3a3a" stroke-width="1.4"/><path d="M94.5 10.9 H127.4 V28 M94.5 10.9 V40 H103 L108.5 35 H94.5" fill="#fafafa" stroke="#3a3a3a" stroke-width="1.4" stroke-linejoin="round"/><path d="M94.5 18.7 H127.4 M94.5 27.8 H115.5 M105.2 10.9 V35.4 M116.5 10.9 V24" stroke="#777" stroke-width="1.1"/><path d="M105.2 10.9 V35.4 M116.5 10.9 V24" stroke="#444" stroke-width="1.2"/><rect x="111.9" y="35.9" width="5.4" height="9" fill="#c6c6c6" stroke="#777" stroke-width="1.1"/><rect x="124.8" y="30.6" width="5.4" height="14.3" fill="#86b9ee" stroke="#2266c8" stroke-width="1.2"/><rect x="117.8" y="27" width="6.8" height="17.9" fill="#fafafa" stroke="#3a3a3a" stroke-width="1.3"/></svg>
<div class="t" style="left:1357px;top:151.73px;font-size:14.5px;color:#242424;">Change</div>
<div class="t" style="left:1347px;top:171.73px;font-size:14.5px;color:#242424;">Chart Type</div>
<div style="position:absolute;left:1429px;top:104px;width:1px;height:109px;background:#d6d6d6;"></div>
<div class="t" style="left:1368.5px;top:203.33px;font-size:12.6px;color:#2b2b2b;">Type</div>
<div class="t" style="left:1447px;top:151.73px;font-size:14.5px;color:#242424;">Move</div>
<div class="t" style="left:1448px;top:171.73px;font-size:14.5px;color:#242424;">Chart</div>
<div style="position:absolute;left:1501px;top:104px;width:1px;height:109px;background:#d6d6d6;"></div>
<div class="t" style="left:1441px;top:203.33px;font-size:12.6px;color:#2b2b2b;">Location</div>
<svg style="position:absolute;left:2527px;top:200px;" width="13" height="8" viewBox="0 0 13 8"><path d="M0.8 0.8 L6.5 6.5 L12.2 0.8" fill="none" stroke="#333" stroke-width="1.4"/></svg>
<div style="position:absolute;left:11px;top:231.5px;width:125px;height:29.5px;background:#fff;border:1px solid #d6d6d6;border-radius:5px;box-sizing:border-box;"></div>
<div class="t" style="left:17.5px;top:238.46px;font-size:16px;color:#242424;letter-spacing:-0.4px;">Chart 5</div>
<svg style="position:absolute;left:117px;top:242px;" width="12" height="8" viewBox="0 0 12 8"><path d="M0.8 0.8 L6 6 L11.2 0.8" fill="none" stroke="#333" stroke-width="1.4"/></svg>
<div style="position:absolute;left:147.5px;top:240px;width:3px;height:3px;background:#333;"></div>
<div style="position:absolute;left:147.5px;top:245px;width:3px;height:3px;background:#333;"></div>
<div style="position:absolute;left:147.5px;top:250px;width:3px;height:3px;background:#333;"></div>
<div style="position:absolute;left:162px;top:231.5px;width:106px;height:29.5px;background:#fff;border:1px solid #d6d6d6;border-radius:5px;box-sizing:border-box;"></div>
<svg style="position:absolute;left:170px;top:238px;" width="16" height="16" viewBox="0 0 16 16"><path d="M1 1 L15 15 M15 1 L1 15" stroke="#9a9a9a" stroke-width="1.3"/></svg>
<svg style="position:absolute;left:197px;top:239px;" width="21" height="14" viewBox="0 0 21 14"><path d="M1 6 L7 12.5 L20 1" fill="none" stroke="#9a9a9a" stroke-width="1.3"/></svg>
<div class="t" style="left:229.5px;top:235.57px;font-size:20px;color:#2b2b2b;font-family:'Liberation Serif',serif;letter-spacing:0.5px;"><i>fx</i></div>
<svg style="position:absolute;left:254px;top:242px;" width="11" height="7" viewBox="0 0 11 7"><path d="M0.8 0.8 L5.5 5.5 L10.2 0.8" fill="none" stroke="#777" stroke-width="1.2"/></svg>
<div style="position:absolute;left:274px;top:231.5px;width:2277px;height:29.5px;background:#fff;border:1px solid #d6d6d6;border-radius:5px;box-sizing:border-box;"></div>
<svg style="position:absolute;left:2533px;top:242px;" width="12" height="7" viewBox="0 0 12 7"><path d="M0.8 0.8 L6 6 L11.2 0.8" fill="none" stroke="#333" stroke-width="1.4"/></svg>
<div style="position:absolute;left:85px;top:323px;width:2093px;height:987px;background:#fff;"></div>
<div style="position:absolute;left:85px;top:323px;width:206px;height:269px;background:#e9eef8;"></div>
<svg style="position:absolute;left:0;top:0" width="2558" height="1310" viewBox="0 0 2558 1310"><path d="M291.5 323 V1310" stroke="#dedede" stroke-width="1"/><path d="M498.5 323 V1310" stroke="#dedede" stroke-width="1"/><path d="M705.5 323 V1310" stroke="#dedede" stroke-width="1"/><path d="M912.5 323 V1310" stroke="#dedede" stroke-width="1"/><path d="M1119.5 323 V1310" stroke="#dedede" stroke-width="1"/><path d="M1326.5 323 V1310" stroke="#dedede" stroke-width="1"/><path d="M1533.5 323 V1310" stroke="#dedede" stroke-width="1"/><path d="M1740.5 323 V1310" stroke="#dedede" stroke-width="1"/><path d="M1947.5 323 V1310" stroke="#dedede" stroke-width="1"/><path d="M2154.5 323 V1310" stroke="#dedede" stroke-width="1"/><path d="M85 376.5 H2178" stroke="#dedede" stroke-width="1"/><path d="M5 376.5 H84" stroke="#d6d6d6" stroke-width="1"/><path d="M85 430.5 H2178" stroke="#dedede" stroke-width="1"/><path d="M5 430.5 H84" stroke="#d6d6d6" stroke-width="1"/><path d="M85 484.5 H2178" stroke="#dedede" stroke-width="1"/><path d="M5 484.5 H84" stroke="#d6d6d6" stroke-width="1"/><path d="M85 538.5 H2178" stroke="#dedede" stroke-width="1"/><path d="M5 538.5 H84" stroke="#d6d6d6" stroke-width="1"/><path d="M85 592.5 H2178" stroke="#dedede" stroke-width="1"/><path d="M5 592.5 H84" stroke="#d6d6d6" stroke-width="1"/><path d="M85 646.5 H2178" stroke="#dedede" stroke-width="1"/><path d="M5 646.5 H84" stroke="#d6d6d6" stroke-width="1"/><path d="M85 700.5 H2178" stroke="#dedede" stroke-width="1"/><path d="M5 700.5 H84" stroke="#d6d6d6" stroke-width="1"/><path d="M85 754.5 H2178" stroke="#dedede" stroke-width="1"/><path d="M5 754.5 H84" stroke="#d6d6d6" stroke-width="1"/><path d="M85 808.5 H2178" stroke="#dedede" stroke-width="1"/><path d="M5 808.5 H84" stroke="#d6d6d6" stroke-width="1"/><path d="M85 862.5 H2178" stroke="#dedede" stroke-width="1"/><path d="M5 862.5 H84" stroke="#d6d6d6" stroke-width="1"/><path d="M85 916.5 H2178" stroke="#dedede" stroke-width="1"/><path d="M5 916.5 H84" stroke="#d6d6d6" stroke-width="1"/><path d="M85 970.5 H2178" stroke="#dedede" stroke-width="1"/><path d="M5 970.5 H84" stroke="#d6d6d6" stroke-width="1"/><path d="M85 1024.5 H2178" stroke="#dedede" stroke-width="1"/><path d="M5 1024.5 H84" stroke="#d6d6d6" stroke-width="1"/><path d="M85 1078.5 H2178" stroke="#dedede" stroke-width="1"/><path d="M5 1078.5 H84" stroke="#d6d6d6" stroke-width="1"/><path d="M85 1132.5 H2178" stroke="#dedede" stroke-width="1"/><path d="M5 1132.5 H84" stroke="#d6d6d6" stroke-width="1"/><path d="M85 1186.5 H2178" stroke="#dedede" stroke-width="1"/><path d="M5 1186.5 H84" stroke="#d6d6d6" stroke-width="1"/><path d="M85 1240.5 H2178" stroke="#dedede" stroke-width="1"/><path d="M5 1240.5 H84" stroke="#d6d6d6" stroke-width="1"/><path d="M85 1294.5 H2178" stroke="#dedede" stroke-width="1"/><path d="M5 1294.5 H84" stroke="#d6d6d6" stroke-width="1"/><path d="M291.5 272 V322" stroke="#d2d2d2" stroke-width="1"/><path d="M498.5 272 V322" stroke="#d2d2d2" stroke-width="1"/><path d="M705.5 272 V322" stroke="#d2d2d2" stroke-width="1"/><path d="M912.5 272 V322" stroke="#d2d2d2" stroke-width="1"/><path d="M1119.5 272 V322" stroke="#d2d2d2" stroke-width="1"/><path d="M1326.5 272 V322" stroke="#d2d2d2" stroke-width="1"/><path d="M1533.5 272 V322" stroke="#d2d2d2" stroke-width="1"/><path d="M1740.5 272 V322" stroke="#d2d2d2" stroke-width="1"/><path d="M1947.5 272 V322" stroke="#d2d2d2" stroke-width="1"/><path d="M2154.5 272 V322" stroke="#d2d2d2" stroke-width="1"/><path d="M84.5 272 V1310" stroke="#a8a8a8" stroke-width="1.2"/><path d="M0 322.5 H2178" stroke="#9f9f9f" stroke-width="1.4"/><path d="M86 376.5 H290" stroke="#cdd3df" stroke-width="1"/><path d="M86 430.5 H290" stroke="#cdd3df" stroke-width="1"/><path d="M86 484.5 H290" stroke="#cdd3df" stroke-width="1"/><path d="M86 538.5 H290" stroke="#cdd3df" stroke-width="1"/><path d="M36 318.5 L81 273.5 V318.5 Z" fill="#dcdcdc"/></svg>
<div style="position:absolute;left:290.7px;top:326px;width:2px;height:266px;background:#2160c4;"></div>
<div style="position:absolute;left:88px;top:592px;width:200px;height:2px;background:#2160c4;"></div>
<div style="position:absolute;left:289px;top:323px;width:5px;height:2px;background:#2160c4;"></div>
<div style="position:absolute;left:289px;top:590px;width:5px;height:5px;background:#2160c4;"></div>
<div style="position:absolute;left:84.5px;top:590px;width:2.5px;height:5px;background:#2160c4;"></div>
<div style="position:absolute;left:85px;top:323px;width:2px;height:1.5px;background:#2160c4;"></div>
<div class="t" style="left:128.50px;width:120px;text-align:center;top:276.65px;font-size:42px;color:#404040;transform:scaleY(1.06);transform-origin:50% 35.55px;">A</div>
<div class="t" style="left:335.50px;width:120px;text-align:center;top:276.65px;font-size:42px;color:#404040;transform:scaleY(1.06);transform-origin:50% 35.55px;">B</div>
<div class="t" style="left:542.50px;width:120px;text-align:center;top:276.65px;font-size:42px;color:#404040;transform:scaleY(1.06);transform-origin:50% 35.55px;">C</div>
<div class="t" style="left:749.50px;width:120px;text-align:center;top:276.65px;font-size:42px;color:#404040;transform:scaleY(1.06);transform-origin:50% 35.55px;">D</div>
<div class="t" style="left:956.50px;width:120px;text-align:center;top:276.65px;font-size:42px;color:#404040;transform:scaleY(1.06);transform-origin:50% 35.55px;">E</div>
<div class="t" style="left:1163.50px;width:120px;text-align:center;top:276.65px;font-size:42px;color:#404040;transform:scaleY(1.06);transform-origin:50% 35.55px;">F</div>
<div class="t" style="left:1370.50px;width:120px;text-align:center;top:276.65px;font-size:42px;color:#404040;transform:scaleY(1.06);transform-origin:50% 35.55px;">G</div>
<div class="t" style="left:1577.50px;width:120px;text-align:center;top:276.65px;font-size:42px;color:#404040;transform:scaleY(1.06);transform-origin:50% 35.55px;">H</div>
<div class="t" style="left:1784.50px;width:120px;text-align:center;top:276.65px;font-size:42px;color:#404040;transform:scaleY(1.06);transform-origin:50% 35.55px;">I</div>
<div class="t" style="left:1991.50px;width:120px;text-align:center;top:276.65px;font-size:42px;color:#404040;transform:scaleY(1.06);transform-origin:50% 35.55px;">J</div>
<svg style="position:absolute;left:0;top:0" width="2558" height="1310"><path transform="translate(31.32,364.90) scale(0.02051,-0.02174)" d="M763 0H583V1147Q518 1085 412.5 1023T223 930V1104Q375 1175 489 1276T650 1472H763V0Z" fill="#404040"/></svg>
<div class="t" style="left:31.32080078125px;top:383.35px;font-size:42px;color:#404040;transform:scaleY(1.06);transform-origin:50% 35.55px;">2</div>
<div class="t" style="left:31.32080078125px;top:437.35px;font-size:42px;color:#404040;transform:scaleY(1.06);transform-origin:50% 35.55px;">3</div>
<div class="t" style="left:31.32080078125px;top:491.35px;font-size:42px;color:#404040;transform:scaleY(1.06);transform-origin:50% 35.55px;">4</div>
<div class="t" style="left:31.32080078125px;top:545.35px;font-size:42px;color:#404040;transform:scaleY(1.06);transform-origin:50% 35.55px;">5</div>
<div class="t" style="left:31.32080078125px;top:599.35px;font-size:42px;color:#404040;transform:scaleY(1.06);transform-origin:50% 35.55px;">6</div>
<div class="t" style="left:31.32080078125px;top:653.35px;font-size:42px;color:#404040;transform:scaleY(1.06);transform-origin:50% 35.55px;">7</div>
<div class="t" style="left:31.32080078125px;top:707.35px;font-size:42px;color:#404040;transform:scaleY(1.06);transform-origin:50% 35.55px;">8</div>
<div class="t" style="left:31.32080078125px;top:761.35px;font-size:42px;color:#404040;transform:scaleY(1.06);transform-origin:50% 35.55px;">9</div>
<div class="t" style="left:43.0px;top:815.35px;font-size:42px;color:#404040;transform:scaleY(1.06);transform-origin:50% 35.55px;">0</div>
<svg style="position:absolute;left:0;top:0" width="2558" height="1310"><path transform="translate(19.64,850.90) scale(0.02051,-0.02174)" d="M763 0H583V1147Q518 1085 412.5 1023T223 930V1104Q375 1175 489 1276T650 1472H763V0Z" fill="#404040"/></svg>
<svg style="position:absolute;left:0;top:0" width="2558" height="1310"><path transform="translate(19.64,904.90) scale(0.02051,-0.02174)" d="M763 0H583V1147Q518 1085 412.5 1023T223 930V1104Q375 1175 489 1276T650 1472H763V0Z" fill="#404040"/><path transform="translate(43.00,904.90) scale(0.02051,-0.02174)" d="M763 0H583V1147Q518 1085 412.5 1023T223 930V1104Q375 1175 489 1276T650 1472H763V0Z" fill="#404040"/></svg>
<div class="t" style="left:43.0px;top:923.35px;font-size:42px;color:#404040;transform:scaleY(1.06);transform-origin:50% 35.55px;">2</div>
<svg style="position:absolute;left:0;top:0" width="2558" height="1310"><path transform="translate(19.64,958.90) scale(0.02051,-0.02174)" d="M763 0H583V1147Q518 1085 412.5 1023T223 930V1104Q375 1175 489 1276T650 1472H763V0Z" fill="#404040"/></svg>
<div class="t" style="left:43.0px;top:977.35px;font-size:42px;color:#404040;transform:scaleY(1.06);transform-origin:50% 35.55px;">3</div>
<svg style="position:absolute;left:0;top:0" width="2558" height="1310"><path transform="translate(19.64,1012.90) scale(0.02051,-0.02174)" d="M763 0H583V1147Q518 1085 412.5 1023T223 930V1104Q375 1175 489 1276T650 1472H763V0Z" fill="#404040"/></svg>
<div class="t" style="left:43.0px;top:1031.35px;font-size:42px;color:#404040;transform:scaleY(1.06);transform-origin:50% 35.55px;">4</div>
<svg style="position:absolute;left:0;top:0" width="2558" height="1310"><path transform="translate(19.64,1066.90) scale(0.02051,-0.02174)" d="M763 0H583V1147Q518 1085 412.5 1023T223 930V1104Q375 1175 489 1276T650 1472H763V0Z" fill="#404040"/></svg>
<div class="t" style="left:43.0px;top:1085.35px;font-size:42px;color:#404040;transform:scaleY(1.06);transform-origin:50% 35.55px;">5</div>
<svg style="position:absolute;left:0;top:0" width="2558" height="1310"><path transform="translate(19.64,1120.90) scale(0.02051,-0.02174)" d="M763 0H583V1147Q518 1085 412.5 1023T223 930V1104Q375 1175 489 1276T650 1472H763V0Z" fill="#404040"/></svg>
<div class="t" style="left:43.0px;top:1139.35px;font-size:42px;color:#404040;transform:scaleY(1.06);transform-origin:50% 35.55px;">6</div>
<svg style="position:absolute;left:0;top:0" width="2558" height="1310"><path transform="translate(19.64,1174.90) scale(0.02051,-0.02174)" d="M763 0H583V1147Q518 1085 412.5 1023T223 930V1104Q375 1175 489 1276T650 1472H763V0Z" fill="#404040"/></svg>
<div class="t" style="left:43.0px;top:1193.35px;font-size:42px;color:#404040;transform:scaleY(1.06);transform-origin:50% 35.55px;">7</div>
<svg style="position:absolute;left:0;top:0" width="2558" height="1310"><path transform="translate(19.64,1228.90) scale(0.02051,-0.02174)" d="M763 0H583V1147Q518 1085 412.5 1023T223 930V1104Q375 1175 489 1276T650 1472H763V0Z" fill="#404040"/></svg>
<div class="t" style="left:43.0px;top:1247.35px;font-size:42px;color:#404040;transform:scaleY(1.06);transform-origin:50% 35.55px;">8</div>
<svg style="position:absolute;left:0;top:0" width="2558" height="1310"><path transform="translate(19.64,1282.90) scale(0.02051,-0.02174)" d="M763 0H583V1147Q518 1085 412.5 1023T223 930V1104Q375 1175 489 1276T650 1472H763V0Z" fill="#404040"/></svg>
<div class="t" style="left:43.0px;top:1301.35px;font-size:42px;color:#404040;transform:scaleY(1.06);transform-origin:50% 35.55px;">9</div>
<svg style="position:absolute;left:0;top:0" width="2558" height="1310"><path transform="translate(19.64,1336.90) scale(0.02051,-0.02174)" d="M763 0H583V1147Q518 1085 412.5 1023T223 930V1104Q375 1175 489 1276T650 1472H763V0Z" fill="#404040"/></svg>
<svg style="position:absolute;left:0;top:0" width="2558" height="1310"><path transform="translate(259.64,364.90) scale(0.02051,-0.02174)" d="M763 0H583V1147Q518 1085 412.5 1023T223 930V1104Q375 1175 489 1276T650 1472H763V0Z" fill="#000"/></svg>
<div class="t" style="left:259.6416015625px;top:383.35px;font-size:42px;color:#000;transform:scaleY(1.06);transform-origin:50% 35.55px;">2</div>
<div class="t" style="left:259.6416015625px;top:437.35px;font-size:42px;color:#000;transform:scaleY(1.06);transform-origin:50% 35.55px;">3</div>
<div class="t" style="left:259.6416015625px;top:491.35px;font-size:42px;color:#000;transform:scaleY(1.06);transform-origin:50% 35.55px;">2</div>
<svg style="position:absolute;left:0;top:0" width="2558" height="1310"><path transform="translate(259.64,580.90) scale(0.02051,-0.02174)" d="M763 0H583V1147Q518 1085 412.5 1023T223 930V1104Q375 1175 489 1276T650 1472H763V0Z" fill="#000"/></svg>
<svg style="position:absolute;left:0;top:0" width="2558" height="1310" viewBox="0 0 2558 1310"><rect x="425.5" y="399" width="1410.0" height="845.5" fill="#fff" stroke="#656565" stroke-width="1.9"/><path d="M500.5 540 V1157" stroke="#d9d9d9" stroke-width="2.8"/><path d="M681.4 540 V1157" stroke="#d9d9d9" stroke-width="2.8"/><path d="M862.3 540 V1157" stroke="#d9d9d9" stroke-width="2.8"/><path d="M1043.2 540 V1157" stroke="#d9d9d9" stroke-width="2.8"/><path d="M1224.1 540 V1157" stroke="#d9d9d9" stroke-width="2.8"/><path d="M1405.0 540 V1157" stroke="#d9d9d9" stroke-width="2.8"/><path d="M1585.9 540 V1157" stroke="#d9d9d9" stroke-width="2.8"/><path d="M1766.8 540 V1157" stroke="#d9d9d9" stroke-width="2.8"/><rect x="502" y="580" width="361.3" height="43.5" fill="#4f81bd"/><rect x="502" y="703" width="722.6" height="43.5" fill="#4f81bd"/><rect x="502" y="826.5" width="1083.9" height="43.5" fill="#4f81bd"/><rect x="502" y="950.5" width="722.6" height="43.5" fill="#4f81bd"/><rect x="502" y="1074.5" width="361.3" height="43.5" fill="#4f81bd"/></svg>
<div class="t" style="left:930.00px;width:400px;text-align:center;top:433.74px;font-size:55px;color:#595959;transform:scaleY(1.03);transform-origin:50% 46.56px;">Chart Title</div>
<div class="t" style="left:451.04541015625px;top:585.22px;font-size:34px;color:#595959;transform:scaleY(1.08);transform-origin:50% 28.78px;">5</div>
<div class="t" style="left:451.04541015625px;top:708.22px;font-size:34px;color:#595959;transform:scaleY(1.08);transform-origin:50% 28.78px;">4</div>
<div class="t" style="left:451.04541015625px;top:831.72px;font-size:34px;color:#595959;transform:scaleY(1.08);transform-origin:50% 28.78px;">3</div>
<div class="t" style="left:451.04541015625px;top:955.72px;font-size:34px;color:#595959;transform:scaleY(1.08);transform-origin:50% 28.78px;">2</div>
<svg style="position:absolute;left:0;top:0" width="2558" height="1310"><path transform="translate(451.05,1108.50) scale(0.01660,-0.01793)" d="M763 0H583V1147Q518 1085 412.5 1023T223 930V1104Q375 1175 489 1276T650 1472H763V0Z" fill="#595959"/></svg>
<div class="t" style="left:491.04541015625px;top:1183.22px;font-size:34px;color:#595959;transform:scaleY(1.08);transform-origin:50% 28.78px;">0</div>
<div class="t" style="left:657.76767578125px;top:1183.22px;font-size:34px;color:#595959;transform:scaleY(1.08);transform-origin:50% 28.78px;">0</div>
<div class="t" style="left:676.67685546875px;top:1183.22px;font-size:34px;color:#595959;transform:scaleY(1.08);transform-origin:50% 28.78px;">.</div>
<div class="t" style="left:686.12314453125px;top:1183.22px;font-size:34px;color:#595959;transform:scaleY(1.08);transform-origin:50% 28.78px;">5</div>
<svg style="position:absolute;left:0;top:0" width="2558" height="1310"><path transform="translate(852.85,1212.00) scale(0.01660,-0.01793)" d="M763 0H583V1147Q518 1085 412.5 1023T223 930V1104Q375 1175 489 1276T650 1472H763V0Z" fill="#595959"/></svg>
<div class="t" style="left:1038.47685546875px;top:1183.22px;font-size:34px;color:#595959;transform:scaleY(1.08);transform-origin:50% 28.78px;">.</div>
<div class="t" style="left:1047.92314453125px;top:1183.22px;font-size:34px;color:#595959;transform:scaleY(1.08);transform-origin:50% 28.78px;">5</div>
<svg style="position:absolute;left:0;top:0" width="2558" height="1310"><path transform="translate(1019.57,1212.00) scale(0.01660,-0.01793)" d="M763 0H583V1147Q518 1085 412.5 1023T223 930V1104Q375 1175 489 1276T650 1472H763V0Z" fill="#595959"/></svg>
<div class="t" style="left:1214.64541015625px;top:1183.22px;font-size:34px;color:#595959;transform:scaleY(1.08);transform-origin:50% 28.78px;">2</div>
<div class="t" style="left:1381.36767578125px;top:1183.22px;font-size:34px;color:#595959;transform:scaleY(1.08);transform-origin:50% 28.78px;">2</div>
<div class="t" style="left:1400.27685546875px;top:1183.22px;font-size:34px;color:#595959;transform:scaleY(1.08);transform-origin:50% 28.78px;">.</div>
<div class="t" style="left:1409.72314453125px;top:1183.22px;font-size:34px;color:#595959;transform:scaleY(1.08);transform-origin:50% 28.78px;">5</div>
<div class="t" style="left:1576.44541015625px;top:1183.22px;font-size:34px;color:#595959;transform:scaleY(1.08);transform-origin:50% 28.78px;">3</div>
<div class="t" style="left:1743.16767578125px;top:1183.22px;font-size:34px;color:#595959;transform:scaleY(1.08);transform-origin:50% 28.78px;">3</div>
<div class="t" style="left:1762.07685546875px;top:1183.22px;font-size:34px;color:#595959;transform:scaleY(1.08);transform-origin:50% 28.78px;">.</div>
<div class="t" style="left:1771.52314453125px;top:1183.22px;font-size:34px;color:#595959;transform:scaleY(1.08);transform-origin:50% 28.78px;">5</div>
<svg style="position:absolute;left:0;top:0" width="2558" height="1310" viewBox="0 0 2558 1310"><circle cx="425.5" cy="399" r="5.9" fill="#fff" stroke="#606060" stroke-width="2.3"/><circle cx="1131" cy="399" r="5.9" fill="#fff" stroke="#606060" stroke-width="2.3"/><circle cx="1835.5" cy="399" r="5.9" fill="#fff" stroke="#606060" stroke-width="2.3"/><circle cx="425.5" cy="821.5" r="5.9" fill="#fff" stroke="#606060" stroke-width="2.3"/><circle cx="1835.5" cy="821.5" r="5.9" fill="#fff" stroke="#606060" stroke-width="2.3"/><circle cx="425.5" cy="1244.5" r="5.9" fill="#fff" stroke="#606060" stroke-width="2.3"/><circle cx="1131" cy="1244.5" r="5.9" fill="#fff" stroke="#606060" stroke-width="2.3"/><circle cx="1835.5" cy="1244.5" r="5.9" fill="#fff" stroke="#606060" stroke-width="2.3"/></svg>
<div style="position:absolute;left:1851px;top:399px;width:35px;height:35px;background:#86c09b;border:1px solid #4e9a6c;box-sizing:border-box;"></div>
<svg style="position:absolute;left:1856px;top:404px;" width="23" height="23" viewBox="0 0 23 23"><path d="M11.5 1 V21.5 M1.2 11.2 H21.8" stroke="#17703d" stroke-width="1.8"/></svg>
<div style="position:absolute;left:1851px;top:446px;width:35px;height:35px;background:#fff;border:1px solid #8a8a8a;box-sizing:border-box;"></div>
<svg style="position:absolute;left:1856px;top:452px;" width="24" height="24" viewBox="0 0 24 24"><path d="M20.2 2.6 C21 2 22 2.6 21.6 3.6 L12.5 14.6 L10.2 12.6 Z" fill="#fff" stroke="#555" stroke-width="1.2" stroke-linejoin="round"/><path d="M10.6 12.4 C8 12 6.5 13.5 6 15.5 C5.5 17.5 3.5 18.5 1.2 18.4 C3 20 6 20.5 8.5 19.5 C11 18.5 12.8 16.5 12.6 14.6 Z" fill="#8cbcf0" stroke="#2f7fd8" stroke-width="1"/></svg>
<div style="position:absolute;left:1851px;top:493px;width:35px;height:35px;background:#fff;border:1px solid #8a8a8a;box-sizing:border-box;"></div>
<svg style="position:absolute;left:1856px;top:499px;" width="24" height="24" viewBox="0 0 24 24"><path d="M1.6 1 H21.6 V4.5 L14.2 13 V21.6 H8.8 V13 L1.6 4.5 Z" fill="none" stroke="#555" stroke-width="1.3" stroke-linejoin="round"/></svg>
<div style="position:absolute;left:1898px;top:397px;width:187px;height:270px;background:#fff;border:1.5px solid #3a3a3a;box-sizing:border-box;"></div>
<svg style="position:absolute;left:1888px;top:405px;" width="12" height="22" viewBox="0 0 12 22"><path d="M11 0.5 L1.5 11 L11 21.5" fill="#fff" stroke="#3a3a3a" stroke-width="1.4"/><path d="M11.5 2 V20" stroke="#fff" stroke-width="2.5"/></svg>
<div class="t" style="left:1911px;top:414.73px;font-size:14.5px;color:#107c41;font-weight:bold;letter-spacing:-0.05px;">Chart Elements</div>
<div style="position:absolute;left:1911px;top:437px;width:123px;height:24px;background:#f0f0f0;border:2px solid #111;box-sizing:border-box;"></div>
<div style="position:absolute;left:1915px;top:441.5px;width:15px;height:15px;border:1.2px solid #333;background:#fff;box-sizing:border-box;"></div>
<svg style="position:absolute;left:1917px;top:443.5px;" width="11" height="11" viewBox="0 0 11 11"><path d="M0 4.9 L5.4 9.2 L11.4 0.3" fill="none" stroke="#444" stroke-width="1.1"/></svg>
<div class="t" style="left:1948.5px;top:442.73px;font-size:14.5px;color:#242424;">Axes</div>
<div style="position:absolute;left:1915px;top:465.5px;width:15px;height:15px;border:1.2px solid #333;background:#fff;box-sizing:border-box;"></div>
<div class="t" style="left:1948.5px;top:466.73px;font-size:14.5px;color:#242424;">Axis Titles</div>
<div style="position:absolute;left:1911px;top:485px;width:123px;height:24px;background:#ebebeb;"></div>
<div style="position:absolute;left:1915px;top:489.5px;width:15px;height:15px;border:1.2px solid #333;background:#fff;box-sizing:border-box;"></div>
<svg style="position:absolute;left:1917px;top:491.5px;" width="11" height="11" viewBox="0 0 11 11"><path d="M0 4.9 L5.4 9.2 L11.4 0.3" fill="none" stroke="#444" stroke-width="1.1"/></svg>
<div class="t" style="left:1948.5px;top:490.73px;font-size:14.5px;color:#242424;">Chart Title</div>
<div style="position:absolute;left:1915px;top:513.5px;width:15px;height:15px;border:1.2px solid #333;background:#fff;box-sizing:border-box;"></div>
<div class="t" style="left:1948.5px;top:514.73px;font-size:14.5px;color:#242424;">Data Labels</div>
<div style="position:absolute;left:1915px;top:537.5px;width:15px;height:15px;border:1.2px solid #333;background:#fff;box-sizing:border-box;"></div>
<div class="t" style="left:1948.5px;top:538.73px;font-size:14.5px;color:#242424;">Data Table</div>
<div style="position:absolute;left:1915px;top:561.5px;width:15px;height:15px;border:1.2px solid #333;background:#fff;box-sizing:border-box;"></div>
<div class="t" style="left:1948.5px;top:562.73px;font-size:14.5px;color:#242424;">Error Bars</div>
<div style="position:absolute;left:1911px;top:581px;width:123px;height:24px;background:#ebebeb;"></div>
<div style="position:absolute;left:1915px;top:585.5px;width:15px;height:15px;border:1.2px solid #333;background:#fff;box-sizing:border-box;"></div>
<svg style="position:absolute;left:1917px;top:587.5px;" width="11" height="11" viewBox="0 0 11 11"><path d="M0 4.9 L5.4 9.2 L11.4 0.3" fill="none" stroke="#444" stroke-width="1.1"/></svg>
<div class="t" style="left:1948.5px;top:586.73px;font-size:14.5px;color:#242424;">Gridlines</div>
<div style="position:absolute;left:1915px;top:609.5px;width:15px;height:15px;border:1.2px solid #333;background:#fff;box-sizing:border-box;"></div>
<div class="t" style="left:1948.5px;top:610.73px;font-size:14.5px;color:#242424;">Legend</div>
<div style="position:absolute;left:1915px;top:633.5px;width:15px;height:15px;border:1.2px solid #333;background:#fff;box-sizing:border-box;"></div>
<div class="t" style="left:1948.5px;top:634.73px;font-size:14.5px;color:#242424;">Trendline</div>
<svg style="position:absolute;left:2058px;top:444px;" width="7" height="11" viewBox="0 0 7 11"><path d="M1 1 L5.5 5.5 L1 10" fill="none" stroke="#333" stroke-width="1.3"/></svg>
<div style="position:absolute;left:2181px;top:269px;width:21px;height:1041px;background:#f4f4f4;border-radius:10px 10px 0 0;"></div>
<svg style="position:absolute;left:2186px;top:275px;" width="11" height="9" viewBox="0 0 11 9"><path d="M5.5 1 L10 7.5 C10.3 8 10 8.5 9.5 8.5 H1.5 C1 8.5 0.7 8 1 7.5 Z" fill="#707070"/></svg>
<div style="position:absolute;left:2186px;top:290px;width:11px;height:889px;background:#707070;border-radius:5.5px;"></div>
<div style="position:absolute;left:2204px;top:271px;width:1px;height:1039px;background:#cfcfcf;"></div>
<div class="t" style="left:2220px;top:288.26px;font-size:18px;color:#1b1b1b;font-weight:bold;letter-spacing:-0.45px;">Format Chart Area</div>
<svg style="position:absolute;left:2483px;top:292px;" width="17" height="10" viewBox="0 0 17 10"><path d="M0.8 0.8 L8.5 8.5 L16.2 0.8" fill="none" stroke="#333" stroke-width="1.4"/></svg>
<svg style="position:absolute;left:2526px;top:290px;" width="13" height="13" viewBox="0 0 13 13"><path d="M0.8 0.8 L12.2 12.2 M12.2 0.8 L0.8 12.2" stroke="#333" stroke-width="1.4"/></svg>
<svg style="position:absolute;left:2225px;top:341px;" width="12" height="8" viewBox="0 0 12 8"><path d="M0.8 0.8 L6 6.2 L11.2 0.8" fill="none" stroke="#2b7cd3" stroke-width="1.3"/></svg>
<div class="t" style="left:2246px;top:334.06px;font-size:16px;color:#242424;letter-spacing:-0.3px;">Chart Options</div>
<div style="position:absolute;left:2246px;top:359.5px;width:95px;height:3.5px;background:#107c41;border-radius:1px;"></div>
<div class="t" style="left:2371.5px;top:334.06px;font-size:16px;color:#242424;letter-spacing:-0.55px;">Text Options</div>
<div style="position:absolute;left:2221px;top:378px;width:40px;height:40px;background:#fff;border:1px solid #8a8a8a;border-radius:5px;box-sizing:border-box;"></div>
<svg style="position:absolute;left:2227px;top:384px;" width="28" height="28" viewBox="0 0 28 28">
<path d="M1.1 15.3 L11.5 5 L21.8 15.3 L11.5 25.6 Z" fill="#fff" stroke="#107c41" stroke-width="1.3" stroke-linejoin="miter"/>
<path d="M8.4 8 V4 C8.4 0.6 12.4 0.6 12.4 4 V10.5" fill="none" stroke="#107c41" stroke-width="1.2"/>
<circle cx="12.4" cy="10.6" r="1.5" fill="#107c41"/>
<path d="M12.8 3.8 C17 6.5 23.5 9 26 13 C27.6 16 25.5 21 22.4 25.5 L21.5 15 C19 11 15 7 12.8 3.8 Z" fill="#107c41"/>
<path d="M12.8 4.5 C15.5 8 18.5 11 21.2 15" fill="none" stroke="#fff" stroke-width="0.9"/>
</svg>
<svg style="position:absolute;left:2278px;top:384px;" width="25" height="28" viewBox="0 0 25 28"><path d="M5.75 21.9 L3.6 27.3 M18.9 21.9 L21 27.3" stroke="#aaa" stroke-width="1.1"/><path d="M12.3 0.6 L23.6 8.8 L18.9 21.9 H5.75 L1 8.8 Z" fill="#fff" stroke="#666" stroke-width="1.2" stroke-linejoin="round"/><path d="M5.75 21.9 H18.9" stroke="#555" stroke-width="1.8"/></svg>
<svg style="position:absolute;left:2327px;top:384px;" width="28" height="28" viewBox="0 0 28 28">
<path d="M9.25 3.8 H26.4 M9.25 1.3 V6.3 M26.4 1.3 V6.3" stroke="#666" stroke-width="1.1"/>
<path d="M0.8 9.4 H5.8 M0.8 26.6 H5.8 M3.3 9.4 V26.6" stroke="#666" stroke-width="1.1"/>
<rect x="8.3" y="8.2" width="18.4" height="18.7" rx="2.2" fill="#6e6e6e"/>
<path d="M17.4 10.3 V24.8 M10.2 17.6 H24.6" stroke="#fff" stroke-width="0.9"/>
<path d="M15.6 12.2 L17.4 10.2 L19.2 12.2 Z M15.6 22.9 L17.4 24.9 L19.2 22.9 Z M12.2 15.8 L10.1 17.6 L12.2 19.4 Z M22.6 15.8 L24.7 17.6 L22.6 19.4 Z" fill="#fff" stroke="#fff" stroke-width="0.6"/>
</svg>
<svg style="position:absolute;left:2219px;top:425px;" width="326" height="12" viewBox="0 0 326 12"><path d="M0 10.5 H11.6 L19.9 0.6 L28.5 10.5 H326" fill="none" stroke="#d0d0d0" stroke-width="1.2"/></svg>
<svg style="position:absolute;left:2232px;top:449px;" width="8" height="12" viewBox="0 0 8 12"><path d="M1 1 L6 6 L1 11" fill="none" stroke="#333" stroke-width="1.4"/></svg>
<div class="t" style="left:2249px;top:447.30px;font-size:15px;color:#1b1b1b;font-weight:bold;">Fill</div>
<svg style="position:absolute;left:2229px;top:484px;" width="12" height="8" viewBox="0 0 12 8"><path d="M0.8 0.8 L6 6 L11.2 0.8" fill="none" stroke="#333" stroke-width="1.4"/></svg>
<div class="t" style="left:2249px;top:480.10px;font-size:15px;color:#1b1b1b;font-weight:bold;letter-spacing:0px;">Border</div>
<svg style="position:absolute;left:2246px;top:516.8px;" width="17" height="17" viewBox="0 0 17 17"><circle cx="8.5" cy="8.5" r="6.8" fill="#fff" stroke="#555" stroke-width="1.1"/></svg>
<div class="t" style="left:2269px;top:517.60px;font-size:15px;color:#242424;letter-spacing:0px;"><u>N</u>o line</div>
<svg style="position:absolute;left:2246px;top:545.8px;" width="17" height="17" viewBox="0 0 17 17"><circle cx="8.5" cy="8.5" r="6.8" fill="#fff" stroke="#555" stroke-width="1.1"/></svg>
<div class="t" style="left:2269px;top:546.60px;font-size:15px;color:#242424;letter-spacing:0px;"><u>S</u>olid line</div>
<svg style="position:absolute;left:2246px;top:574.8px;" width="17" height="17" viewBox="0 0 17 17"><circle cx="8.5" cy="8.5" r="6.8" fill="#fff" stroke="#555" stroke-width="1.1"/></svg>
<div class="t" style="left:2269px;top:575.60px;font-size:15px;color:#242424;letter-spacing:0px;"><u>G</u>radient line</div>
<svg style="position:absolute;left:2246px;top:603.8px;" width="17" height="17" viewBox="0 0 17 17"><circle cx="8.5" cy="8.5" r="5.6" fill="#fff" stroke="#107c41" stroke-width="3.4"/></svg>
<div class="t" style="left:2269px;top:604.60px;font-size:15px;color:#242424;letter-spacing:0px;">A<u>u</u>tomatic</div>
<div style="position:absolute;left:2247px;top:631px;width:273px;height:1px;background:#d0d0d0;"></div>
<div class="t" style="left:2259px;top:649.80px;font-size:15px;color:#242424;letter-spacing:0px;"><u>C</u>olor</div>
<div class="t" style="left:2259px;top:687.30px;font-size:15px;color:#242424;letter-spacing:-0.35px;"><u>T</u>ransparency</div>
<div class="t" style="left:2259px;top:722.80px;font-size:15px;color:#242424;letter-spacing:0px;"><u>W</u>idth</div>
<div class="t" style="left:2259px;top:762.80px;font-size:15px;color:#242424;letter-spacing:0px;"><u>C</u>ompound type</div>
<div class="t" style="left:2259px;top:804.80px;font-size:15px;color:#242424;letter-spacing:0px;"><u>D</u>ash type</div>
<div class="t" style="left:2259px;top:841.80px;font-size:15px;color:#242424;letter-spacing:0px;">C<u>a</u>p type</div>
<div class="t" style="left:2259px;top:874.30px;font-size:15px;color:#242424;letter-spacing:0px;"><u>J</u>oin type</div>
<div style="position:absolute;left:2463px;top:639px;width:57px;height:35px;background:#fff;border:1px solid #8f8f8f;border-radius:5px;box-sizing:border-box;"></div>
<svg style="position:absolute;left:2474px;top:645px;" width="22" height="23" viewBox="0 0 22 23"><path d="M9 2 H2 V13 H6" fill="none" stroke="#444" stroke-width="1.3"/><path d="M17 1.5 C18 0.5 19.5 0.5 20.5 1.5 C21.3 2.3 21.3 3.8 20.3 4.8 L10.5 14.5 L6.5 15.5 L7.5 11.5 Z" fill="#3a8ad8" stroke="#2b7cd3" stroke-width="1.1" stroke-linejoin="round"/><path d="M16 3.5 L18.5 6" stroke="#fff" stroke-width="0.8"/><rect x="1.5" y="16.5" width="19.5" height="4.5" fill="#d4d4d4"/></svg>
<svg style="position:absolute;left:2505px;top:654px;" width="8" height="5" viewBox="0 0 8 5"><path d="M0.8 0.8 L4 4 L7.2 0.8" fill="none" stroke="#333" stroke-width="1.3"/></svg>
<div style="position:absolute;left:2360px;top:688px;width:1.5px;height:14px;background:#555;"></div>
<div style="position:absolute;left:2360px;top:694px;width:50px;height:1.3px;background:#777;"></div>
<div style="position:absolute;left:2420px;top:681px;width:100px;height:27.5px;background:#fff;border:1px solid #8f8f8f;border-radius:5px;box-sizing:border-box;"></div>
<div class="t" style="left:2428px;top:686.80px;font-size:15px;color:#242424;">0%</div>
<svg style="position:absolute;left:2505px;top:687px;" width="7" height="16" viewBox="0 0 7 16"><path d="M0.8 3.6 L3.5 0.9 L6.2 3.6 M0.8 13.7 L3.5 16.4 L6.2 13.7" fill="none" stroke="#333" stroke-width="1.1"/></svg>
<div style="position:absolute;left:2420px;top:716px;width:100px;height:27.5px;background:#fff;border:1px solid #8f8f8f;border-radius:5px;box-sizing:border-box;"></div>
<div class="t" style="left:2428px;top:721.80px;font-size:15px;color:#242424;">0.75 pt</div>
<svg style="position:absolute;left:2505px;top:722px;" width="7" height="16" viewBox="0 0 7 16"><path d="M0.8 3.6 L3.5 0.9 L6.2 3.6 M0.8 13.7 L3.5 16.4 L6.2 13.7" fill="none" stroke="#333" stroke-width="1.1"/></svg>
<div style="position:absolute;left:2463px;top:751.5px;width:57px;height:34.5px;background:#fff;border:1px solid #8f8f8f;border-radius:5px;box-sizing:border-box;"></div>
<svg style="position:absolute;left:2474px;top:758px;" width="22" height="20" viewBox="0 0 22 20"><rect x="1.1" y="1.4" width="19.9" height="3.5" fill="#3a8ad8"/><path d="M4.8 7.1 H21" stroke="#555" stroke-width="1.4"/><rect x="1.1" y="11.1" width="19.9" height="3.8" fill="#3a8ad8"/><path d="M4.8 17.1 H21" stroke="#555" stroke-width="1.4"/></svg>
<svg style="position:absolute;left:2505px;top:767px;" width="8" height="5" viewBox="0 0 8 5"><path d="M0.8 0.8 L4 4 L7.2 0.8" fill="none" stroke="#333" stroke-width="1.3"/></svg>
<div style="position:absolute;left:2463px;top:793.5px;width:57px;height:34px;background:#fff;border:1px solid #8f8f8f;border-radius:5px;box-sizing:border-box;"></div>
<svg style="position:absolute;left:2474px;top:800px;" width="22" height="19" viewBox="0 0 22 19"><path d="M1.1 1.6 H21" stroke="#555" stroke-width="1.4"/><path d="M1.1 7.1 H21" stroke="#555" stroke-width="1.4" stroke-dasharray="1.5 2.2"/><path d="M1.1 12 H21" stroke="#555" stroke-width="1.4" stroke-dasharray="3.4 1.3"/><path d="M1.1 16.8 H21" stroke="#555" stroke-width="1.4" stroke-dasharray="4.6 1.8"/></svg>
<svg style="position:absolute;left:2505px;top:810px;" width="8" height="5" viewBox="0 0 8 5"><path d="M0.8 0.8 L4 4 L7.2 0.8" fill="none" stroke="#333" stroke-width="1.3"/></svg>
<div style="position:absolute;left:2439px;top:835px;width:81px;height:25.5px;background:#fff;border:1px solid #8f8f8f;border-radius:5px;box-sizing:border-box;"></div>
<div class="t" style="left:2446px;top:841.30px;font-size:15px;color:#242424;">Flat</div>
<svg style="position:absolute;left:2505px;top:846px;" width="8" height="5" viewBox="0 0 8 5"><path d="M0.8 0.8 L4 4 L7.2 0.8" fill="none" stroke="#333" stroke-width="1.3"/></svg>
<div style="position:absolute;left:2442px;top:868px;width:78px;height:25.5px;background:#fff;border:1px solid #8f8f8f;border-radius:5px;box-sizing:border-box;"></div>
<div class="t" style="left:2450px;top:874.30px;font-size:15px;color:#242424;">Round</div>
<svg style="position:absolute;left:2505px;top:879px;" width="8" height="5" viewBox="0 0 8 5"><path d="M0.8 0.8 L4 4 L7.2 0.8" fill="none" stroke="#333" stroke-width="1.3"/></svg>
<div class="t" style="left:2259px;top:911.60px;font-size:15px;color:#242424;letter-spacing:0px;"><u>B</u>egin Arrow type</div>
<div style="position:absolute;left:2463.5px;top:902.3px;width:56.5px;height:34px;background:#f0f0f0;border:1px solid #dadada;border-radius:5px;box-sizing:border-box;"></div>
<svg style="position:absolute;left:2474px;top:909.8px;" width="22" height="20" viewBox="0 0 22 20"><path d="M1 6 H20 M16.5 2.5 L20 6 L16.5 9.5 M1 14 H20 M4.5 10.5 L1 14 L4.5 17.5 M16.5 10.5 L20 14 L16.5 17.5" fill="none" stroke="#b0b0b0" stroke-width="1.2"/></svg>
<svg style="position:absolute;left:2505px;top:917.3px;" width="8" height="5" viewBox="0 0 8 5"><path d="M0.8 0.8 L4 4 L7.2 0.8" fill="none" stroke="#b8b8b8" stroke-width="1.3"/></svg>
<div class="t" style="left:2259px;top:953.30px;font-size:15px;color:#242424;letter-spacing:0px;">Begin Arrow <u>s</u>ize</div>
<div style="position:absolute;left:2463.5px;top:944.0px;width:56.5px;height:34px;background:#f0f0f0;border:1px solid #dadada;border-radius:5px;box-sizing:border-box;"></div>
<svg style="position:absolute;left:2474px;top:951.5px;" width="22" height="20" viewBox="0 0 22 20"><rect x="1" y="1" width="20" height="1.5" fill="#b8b8b8"/><rect x="1" y="5" width="20" height="2.2" fill="#b8b8b8"/><rect x="1" y="9.5" width="20" height="3" fill="#b8b8b8"/><rect x="1" y="15" width="20" height="4.5" fill="#b8b8b8"/></svg>
<svg style="position:absolute;left:2505px;top:959.0px;" width="8" height="5" viewBox="0 0 8 5"><path d="M0.8 0.8 L4 4 L7.2 0.8" fill="none" stroke="#b8b8b8" stroke-width="1.3"/></svg>
<div class="t" style="left:2259px;top:995.70px;font-size:15px;color:#242424;letter-spacing:0px;"><u>E</u>nd Arrow type</div>
<div style="position:absolute;left:2463.5px;top:986.4px;width:56.5px;height:34px;background:#f0f0f0;border:1px solid #dadada;border-radius:5px;box-sizing:border-box;"></div>
<svg style="position:absolute;left:2474px;top:993.9px;" width="22" height="20" viewBox="0 0 22 20"><path d="M1 6 H20 M16.5 2.5 L20 6 L16.5 9.5 M1 14 H20 M4.5 10.5 L1 14 L4.5 17.5 M16.5 10.5 L20 14 L16.5 17.5" fill="none" stroke="#b0b0b0" stroke-width="1.2"/></svg>
<svg style="position:absolute;left:2505px;top:1001.4px;" width="8" height="5" viewBox="0 0 8 5"><path d="M0.8 0.8 L4 4 L7.2 0.8" fill="none" stroke="#b8b8b8" stroke-width="1.3"/></svg>
<div class="t" style="left:2259px;top:1038.00px;font-size:15px;color:#242424;letter-spacing:0px;">E<u>n</u>d Arrow size</div>
<div style="position:absolute;left:2463.5px;top:1028.7px;width:56.5px;height:34px;background:#f0f0f0;border:1px solid #dadada;border-radius:5px;box-sizing:border-box;"></div>
<svg style="position:absolute;left:2474px;top:1036.2px;" width="22" height="20" viewBox="0 0 22 20"><rect x="1" y="1" width="20" height="1.5" fill="#b8b8b8"/><rect x="1" y="5" width="20" height="2.2" fill="#b8b8b8"/><rect x="1" y="9.5" width="20" height="3" fill="#b8b8b8"/><rect x="1" y="15" width="20" height="4.5" fill="#b8b8b8"/></svg>
<svg style="position:absolute;left:2505px;top:1043.7px;" width="8" height="5" viewBox="0 0 8 5"><path d="M0.8 0.8 L4 4 L7.2 0.8" fill="none" stroke="#b8b8b8" stroke-width="1.3"/></svg>
<div style="position:absolute;left:2259px;top:1072px;width:16px;height:15px;background:#fff;border:1px solid #555;border-radius:2px;box-sizing:border-box;"></div>
<div class="t" style="left:2281px;top:1072.30px;font-size:15px;color:#242424;letter-spacing:-0.2px;"><u>R</u>ounded corners</div>
</body></html>
